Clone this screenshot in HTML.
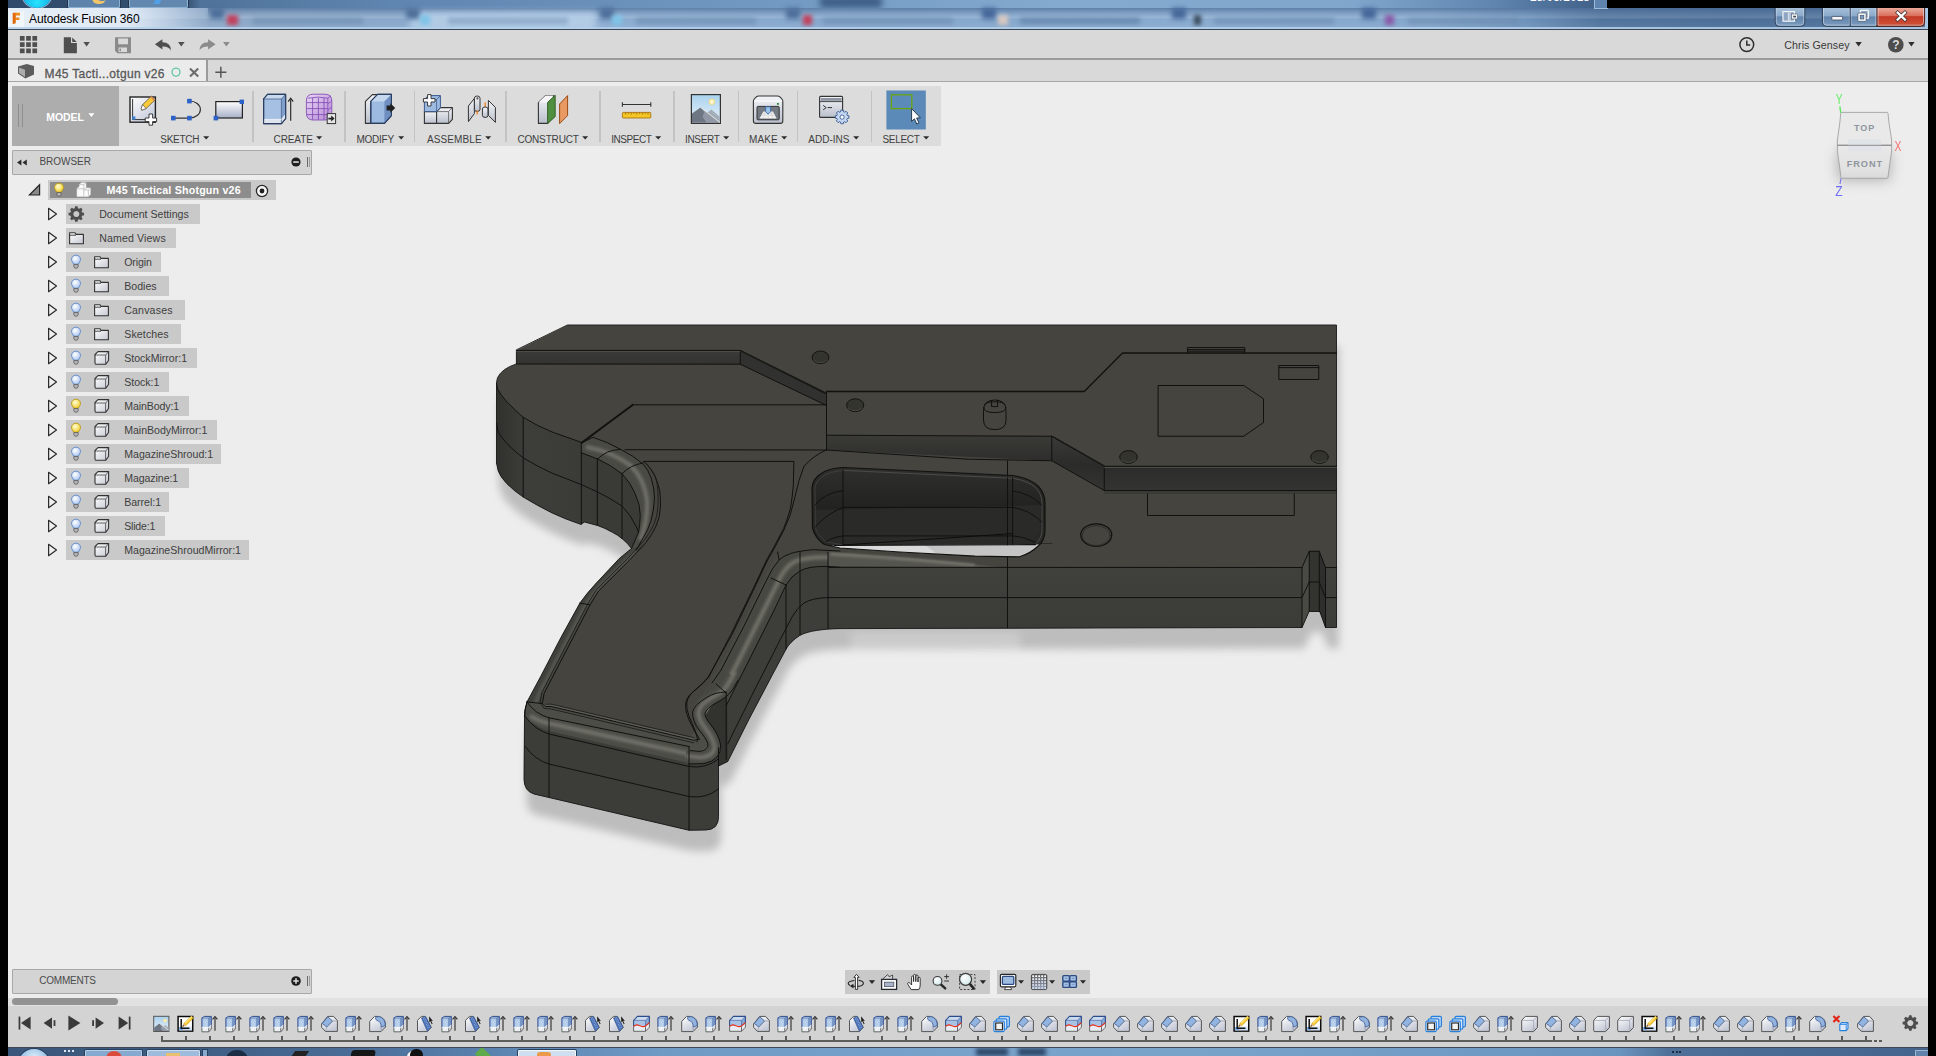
<!DOCTYPE html>
<html lang="en"><head><meta charset="utf-8"><title>Autodesk Fusion 360</title>
<style>
html,body{margin:0;padding:0;background:#ededed;}
body{width:1936px;height:1056px;overflow:hidden;font-family:"Liberation Sans",sans-serif;}
#root{position:relative;width:1936px;height:1056px;overflow:hidden;background:#ededed;}
#root div,#root svg{position:absolute;}
.t{white-space:nowrap;line-height:20px;height:20px;}
.blk{background:#000;}
.bar{background:#d9d9d9;}
.row{background:#c9c9c9;height:19.4px;}

</style></head>
<body>
<div id="root">
<svg width="0" height="0" style="left:0;top:0"><defs>
<linearGradient id="gBox" x1="0" y1="0" x2="1" y2="1"><stop offset="0" stop-color="#ffffff"/><stop offset="1" stop-color="#c6c9d2"/></linearGradient>
<linearGradient id="gBlue" x1="0" y1="0" x2="0" y2="1"><stop offset="0" stop-color="#b9cfea"/><stop offset="1" stop-color="#8fb0dc"/></linearGradient>
<radialGradient id="gBulbB" cx="0.4" cy="0.35" r="0.7"><stop offset="0" stop-color="#ffffff"/><stop offset="1" stop-color="#a9c6ee"/></radialGradient>
<radialGradient id="gBulbY" cx="0.4" cy="0.35" r="0.7"><stop offset="0" stop-color="#fffbd0"/><stop offset="1" stop-color="#f2cf2a"/></radialGradient>
<g id="bulbB"><path d="M6,1.2 C3.2,1.2 1.5,3.2 1.5,5.4 C1.5,7.4 3.2,8.4 3.6,10.2 L8.4,10.2 C8.8,8.4 10.5,7.4 10.5,5.4 C10.5,3.2 8.8,1.2 6,1.2 Z" fill="url(#gBulbB)" stroke="#5d86c8" stroke-width="0.9"/><path d="M3.9,10.6 H8.1 V12.6 Q8.1,14.2 6,14.2 Q3.9,14.2 3.9,12.6 Z" fill="#b9b9b9" stroke="#555" stroke-width="0.8"/></g>
<g id="bulbY"><path d="M6,1.2 C3.2,1.2 1.5,3.2 1.5,5.4 C1.5,7.4 3.2,8.4 3.6,10.2 L8.4,10.2 C8.8,8.4 10.5,7.4 10.5,5.4 C10.5,3.2 8.8,1.2 6,1.2 Z" fill="url(#gBulbY)" stroke="#b8961a" stroke-width="0.9"/><path d="M3.9,10.6 H8.1 V12.6 Q8.1,14.2 6,14.2 Q3.9,14.2 3.9,12.6 Z" fill="#b9b9b9" stroke="#555" stroke-width="0.8"/></g>
<g id="folder"><path d="M1.6,2.8 H7 L8,4.4 H15.4 V13.8 H1.6 Z" fill="url(#gBox)" stroke="#333" stroke-width="1.1" stroke-linejoin="round"/><path d="M1.6,5.2 H8" stroke="#333" stroke-width="0.9" fill="none"/></g>
<g id="body"><path d="M2,4.5 L5,1.6 H15.6 V10.5 L12.6,14.3 H3.4 Q2,14.3 2,12.9 Z" fill="url(#gBox)" stroke="#333" stroke-width="1.1" stroke-linejoin="round"/><path d="M12.6,14.3 V5.2 L15.6,1.6 M12.6,5 H3 Q2,5 2,6" stroke="#444" stroke-width="0.8" fill="none"/></g>
<g id="comp"><path d="M2,6.5 L4.4,4.6 V2.4 L6.6,0.8 H11 V6 H15.4 V12.4 L13.4,14.6 H2 Z" fill="#fbfbfb" stroke="#e0e0e0" stroke-width="0.6"/><path d="M8.8,2.8 V14.4 M8.8,7.6 L11,6 M2,6.8 H8.6 M8.8,8 H13.4 V14.4 M13.4,8 L15.2,6.2 M4.4,2.6 H8.8 L11,0.9" stroke="#bdbdbd" stroke-width="0.8" fill="none"/></g>
<g id="gear"><path d="M7.2,0.8 H9.8 L10.3,2.9 L11.6,3.5 L13.5,2.4 L15.3,4.2 L14.2,6.1 L14.8,7.4 L16.9,7.9 V10.5 L14.8,11 L14.2,12.3 L15.3,14.2 L13.5,16 L11.6,14.9 L10.3,15.5 L9.8,17.6 H7.2 L6.7,15.5 L5.4,14.9 L3.5,16 L1.7,14.2 L2.8,12.3 L2.2,11 L0.1,10.5 V7.9 L2.2,7.4 L2.8,6.1 L1.7,4.2 L3.5,2.4 L5.4,3.5 L6.7,2.9 Z M8.5,5.9 A3.3,3.3 0 1 0 8.51,5.9 Z" fill="#4e4e4e" fill-rule="evenodd" transform="translate(0.5,-0.4) scale(0.92)"/></g>

<linearGradient id="gIce" x1="0" y1="0" x2="1" y2="1"><stop offset="0" stop-color="#ffffff"/><stop offset="1" stop-color="#d5d9e2"/></linearGradient>

<linearGradient id="gIce2" x1="0" y1="0" x2="0.6" y2="1"><stop offset="0" stop-color="#ffffff"/><stop offset="1" stop-color="#c3c8d6"/></linearGradient>
<linearGradient id="gSkyS" x1="0" y1="0" x2="0" y2="1"><stop offset="0" stop-color="#a9d0ee"/><stop offset="1" stop-color="#eaf3fa"/></linearGradient>
<g id="tlIMG"><rect x="2.7" y="3.3" width="15.2" height="15.2" fill="url(#gSkyS)" stroke="#555" stroke-width="1"/><path d="M3.2,18 L3.2,14.6 L8.4,10.4 L17.4,17 V18 Z" fill="#6e7684"/><path d="M8.4,10.4 L10.6,13.4 L9.8,15.4 L12,18 H17.4 V17 Z" fill="#959cab"/><path d="M12.4,13.2 L14.4,12 L17.4,14.4 V17 Z" fill="#a9b1bd"/><path d="M8.4,10.4 L17.4,17.2" stroke="#ecece4" stroke-width="0.7"/><circle cx="14" cy="7.6" r="1.6" fill="#fff3c4" stroke="#f0d878" stroke-width="0.6"/></g>
<g id="tlSK"><rect x="3.1" y="3.5" width="14.6" height="14.6" fill="#fff" stroke="#0c0c0c" stroke-width="1.5"/><path d="M4,13.6 H16.8 V17.3 H4 Z" fill="#cfe0f4"/><path d="M4,14 H8 V17.3 H4 Z" fill="#7fb0e8"/><path d="M6.2,6 V15.2 H14.4" stroke="#111" stroke-width="1.5" fill="none"/><path d="M7.6,13.6 L9,10.2 L16.4,3 L18.4,5 L11,12.4 Z" fill="#f8c61c" stroke="#b07a10" stroke-width="0.4"/><path d="M9.6,9.8 L16.6,3.2 L17.4,4 L10.4,10.8 Z" fill="#fde98a"/><path d="M7.6,13.6 L9,10.2 L11,12.4 Z" fill="#e8b98a"/><path d="M7.6,13.6 L8.2,12.1 L9.1,13 Z" fill="#222"/></g>
<g id="tlEX"><path d="M2.9,4.9 L5.3,3.4 H12.3 V14.3 L9.8,18.8 H2.9 Z" fill="#edf1f6"/><path d="M2.9,4.9 H9.8 V14.3 H2.9 Z" fill="#a7c2e5"/><path d="M4.2,6.4 H8.6 V14.3 H4.2 Z" fill="#b9d0ec"/><path d="M9.8,4.9 L12.3,3.4 V12 L9.8,14.3 Z" fill="#84a3d2"/><path d="M2.9,4.9 L5.3,3.4 H12.3 L9.8,4.9 Z" fill="#cfdef0"/><path d="M2.9,14.3 V4.9 L5.3,3.4 H12.3 V12.4" fill="none" stroke="#2d4c8c" stroke-width="1"/><path d="M9.8,4.9 V14.3 M9.8,4.9 L12.3,3.4 M2.9,4.9 H9.8" fill="none" stroke="#4a68a4" stroke-width="0.7"/><path d="M2.9,14.3 V18.8 H9.8 L12.3,16 V12.4 M9.8,18.8 V14.6" fill="none" stroke="#5a5a5a" stroke-width="0.9"/><path d="M2.9,14.4 H9.8 L12.3,12.2" fill="none" stroke="#fff" stroke-width="0.8"/><path d="M16,17.8 V5" stroke="#2a2a2a" stroke-width="1.1"/><path d="M13.6,6.4 L16,3.6 L18.4,6.4" fill="none" stroke="#2a2a2a" stroke-width="1.1"/></g>
<g id="tlCH"><path d="M2.6,11 L8.6,3.4 H14.6 L18.4,7.6 V18.4 H6.4 L2.6,14.4 Z" fill="url(#gIce2)" stroke="#555" stroke-width="1" stroke-linejoin="round"/><path d="M3.2,10.4 L8.8,3.9 L13.6,8 L7.8,14 Z" fill="#94b4e0" stroke="#3a5a94" stroke-width="0.8" stroke-linejoin="round"/><path d="M7.8,14 L13.6,8 L18.2,7.8 M7.8,14 L6.6,18" fill="none" stroke="#8a8f9c" stroke-width="0.6"/></g>
<g id="tlFI"><path d="M2.7,18.6 V8.4 L7.6,3.4 H11 Q18.5,4.4 18.5,12.4 V14 L14,18.6 Z" fill="url(#gIce2)" stroke="#555" stroke-width="1" stroke-linejoin="round"/><path d="M8.2,5 Q9.6,3.6 11.6,3.5 Q18.2,4.6 18.3,12.4 L14.2,14.2 Q14.4,8.4 9.6,7.2 Z" fill="#94b4e0" stroke="#3a5a94" stroke-width="0.8" stroke-linejoin="round"/><path d="M14.2,14.2 V18.4" stroke="#8a8f9c" stroke-width="0.6"/></g>
<g id="tlPP"><path d="M2.5,18.6 V7.4 L6.4,3.4 H10 L16.2,14.4 L12.4,18.6 Z" fill="url(#gIce2)" stroke="#555" stroke-width="1" stroke-linejoin="round"/><path d="M6.4,4.9 L10.6,3.5 L16.2,14.3 L12.4,18.2 Z" fill="#4a72b8" stroke="#2c4a88" stroke-width="0.6" stroke-linejoin="round"/><path d="M8,4.6 L13.8,16.4 M9.4,4.2 L15.2,15.4" stroke="#a9c2e6" stroke-width="0.7" stroke-dasharray="1,0.8"/><path d="M14.1,3.2 L17.9,8 L16.2,7.8 L17.6,10.8 L16.7,11.2 L15.4,8.2 L14.3,9.4 Z" fill="#1e1e1e"/></g>
<g id="tlSP"><path d="M2.6,7.4 L6.5,3.4 H18.4 V14.3 L14.5,18.3 H2.6 Z" fill="#e9edf3"/><path d="M2.6,7.4 L6.5,3.4 H18.4 V9.6 L14.5,13.6 L10.6,12.6 L7,12.2 L2.6,13.4 Z" fill="#a7c2e5"/><path d="M14.5,7.4 L18.4,3.4 V9.6 L14.5,13.4 Z" fill="#86a5d3"/><path d="M2.6,7.4 L6.5,3.4 H18.4 L14.5,7.4 Z" fill="#cbdbef"/><path d="M2.6,13.2 V7.4 L6.5,3.4 H18.4 V9.8" fill="none" stroke="#2d4c8c" stroke-width="1.1"/><path d="M2.6,7.4 H14.5 V13.4 M14.5,7.4 L18.4,3.4" fill="none" stroke="#4a68a4" stroke-width="0.7"/><path d="M2.6,13.4 V18.3 H14.5 L18.4,14.3 V9.8 M14.5,18.3 V13.6" fill="none" stroke="#5a5a5a" stroke-width="0.9"/><path d="M2.6,13.4 C4.6,11.4 6.4,11.4 8.4,12.6 C10.6,13.8 12.6,14 14.5,13 L18.4,9.6" stroke="#ea2a14" stroke-width="1.1" fill="none"/></g>
<g id="tlCB"><rect x="8" y="3.4" width="10.4" height="10.4" rx="1.2" fill="#bcd6f2" stroke="#2880dc" stroke-width="1.2"/><rect x="5.4" y="5.8" width="10.4" height="10.4" rx="1.2" fill="#d6e6f8" stroke="#2880dc" stroke-width="1.2"/><rect x="2.9" y="8.2" width="10.4" height="10.4" rx="1.2" fill="#eef4fc" stroke="#2880dc" stroke-width="1.2"/><rect x="4.7" y="10" width="6.8" height="6.8" fill="#f4f4f4" stroke="#2a2a2a" stroke-width="1.2"/></g>
<g id="tlBX"><path d="M2.7,7.4 L6.4,3.4 H18.4 V14.4 L14.6,18.6 H4 Q2.7,18.6 2.7,17.4 Z" fill="url(#gIce2)" stroke="#555" stroke-width="1" stroke-linejoin="round"/><path d="M14.6,18.4 V7.4 H3 M14.6,7.4 L18.2,3.6" stroke="#9a9fab" stroke-width="0.7" fill="none"/></g>
<g id="tlRM"><path d="M2.4,3 L8.4,9 M8.4,3 L2.4,9" stroke="#e02418" stroke-width="2.1"/><path d="M8.8,11.4 L10.6,9.6 H17 V15.6 L15.2,17.6 H8.8 Z" fill="#dcebfa" stroke="#2880dc" stroke-width="1.1" stroke-linejoin="round"/><path d="M8.8,11.4 H15.2 V17.6 M15.2,11.4 L17,9.6" stroke="#2880dc" stroke-width="0.9" fill="none"/></g>
</defs></svg>
<div id="aero" style="left:8px;top:0;width:1920px;height:30px;overflow:hidden;background:#6f99c2">
 <div style="left:0;top:0;width:1920px;height:9px;background:linear-gradient(90deg,#2f4a6a 0,#34506f 9.3%,#4f7299 10%,#5f86b0 20%,#7199c1 40%,#84aacf 55%,#80a6cc 70%,#6288b2 77%,#4a6c95 81%,#3c5a80 84%,#36527a 100%)"></div>
 <div style="left:812px;top:-4px;width:62px;height:12px;background:#3f5f88;filter:blur(3px)"></div>
 <div style="left:14px;top:-22px;width:30px;height:30px;border-radius:15px;background:radial-gradient(circle at 50% 80%,#27e3ff 0,#16b8ea 45%,#1a6fa8 80%);box-shadow:0 0 0 1px #8fb4d8"></div>
 <div style="left:59px;top:-10px;width:52px;height:17px;border-radius:2px;background:#5f84ac;border:1px solid #23364d;box-shadow:inset 0 0 0 1px #8dafd2"></div>
 <div style="left:120px;top:-10px;width:59px;height:17px;border-radius:2px;background:#6288b0;border:1px solid #23364d;box-shadow:inset 0 0 0 1px #8dafd2"></div>
 <div style="left:84px;top:-8px;width:14px;height:12px;border-radius:7px;background:#f2c46a;filter:blur(0.6px)"></div>
 <div style="left:88px;top:-10px;width:12px;height:11px;border-radius:6px;background:#5f84ac"></div>
 <div style="left:147px;top:-3px;width:6px;height:7px;background:#4fa0e8;transform:skewX(-25deg)"></div>
 <div style="left:0;top:8px;width:1920px;height:21px;background:linear-gradient(90deg,#e4edf6 0,#dfe9f4 6.2%,#bccfe4 8%,#8aa6c6 10.5%,#86a6ca 20%,#8aabd0 30%,#82a5cb 45%,#86a9ce 62%,#82a5cb 74%,#6a90b9 79%,#4d719b 83%,#486b95 90%,#4d719b 100%)"></div>
 <div style="left:200px;top:8px;width:1720px;height:9px;background:linear-gradient(180deg,rgba(58,92,138,0.6) 0,rgba(58,92,138,0.25) 55%,rgba(58,92,138,0) 100%)"></div>
 <div style="left:0;top:8px;width:1920px;height:21px;background:linear-gradient(180deg,rgba(255,255,255,0.04) 0,rgba(255,255,255,0.14) 45%,rgba(255,255,255,0.02) 55%,rgba(255,255,255,0.08) 100%)"></div>
 <div style="left:402px;top:12px;width:186px;height:19px;background:#b9d1ea;filter:blur(3.5px);opacity:0.85"></div>
 <div style="left:202px;top:8px;width:14px;height:11px;background:#4d6f9a;filter:blur(2.5px)"></div>
 <div style="left:398px;top:8px;width:14px;height:11px;background:#4d6f9a;filter:blur(2.5px)"></div>
 <div style="left:592px;top:8px;width:14px;height:11px;background:#4d6f9a;filter:blur(2.5px)"></div>
 <div style="left:778px;top:8px;width:14px;height:11px;background:#4d6f9a;filter:blur(2.5px)"></div>
 <div style="left:974px;top:8px;width:14px;height:11px;background:#45679a;filter:blur(2.5px)"></div>
 <div style="left:1164px;top:8px;width:14px;height:11px;background:#45679a;filter:blur(2.5px)"></div>
 <div style="left:1354px;top:8px;width:14px;height:11px;background:#45679a;filter:blur(2.5px)"></div>
 <div style="left:219px;top:15px;width:11px;height:10px;background:#c2405c;filter:blur(2.2px)"></div>
 <div style="left:795px;top:15px;width:9px;height:10px;background:#c2405c;filter:blur(2.2px)"></div>
 <div style="left:412px;top:15px;width:10px;height:10px;background:#7fc4e8;filter:blur(2.2px)"></div>
 <div style="left:604px;top:15px;width:10px;height:10px;background:#7fc4e8;filter:blur(2.2px)"></div>
 <div style="left:990px;top:15px;width:10px;height:10px;background:#d8c8c0;filter:blur(2.2px)"></div>
 <div style="left:1186px;top:15px;width:7px;height:10px;background:#3b4a5c;filter:blur(2px)"></div>
 <div style="left:1377px;top:15px;width:9px;height:10px;background:#8a5aa8;filter:blur(2.2px)"></div>
 <div style="left:245px;top:18px;width:110px;height:6px;background:#6f8fb2;filter:blur(2.5px);opacity:0.8"></div>
 <div style="left:440px;top:18px;width:120px;height:6px;background:#7f9fc0;filter:blur(2.5px);opacity:0.8"></div>
 <div style="left:628px;top:18px;width:120px;height:6px;background:#6f8fb2;filter:blur(2.5px);opacity:0.8"></div>
 <div style="left:815px;top:18px;width:130px;height:6px;background:#6f8fb2;filter:blur(2.5px);opacity:0.8"></div>
 <div style="left:1012px;top:18px;width:120px;height:6px;background:#5f7fa6;filter:blur(2.5px);opacity:0.8"></div>
 <div style="left:1206px;top:18px;width:120px;height:6px;background:#6f8fb2;filter:blur(2.5px);opacity:0.8"></div>
 <div style="left:1400px;top:18px;width:110px;height:6px;background:#6f8fb2;filter:blur(2.5px);opacity:0.8"></div>
 <div style="left:0;top:27.4px;width:1920px;height:1.3px;background:#b4d0ea;opacity:0.85"></div>
 <div style="left:0;top:28.7px;width:1920px;height:1.3px;background:#39465a"></div>
 <div style="left:1916.6px;top:8px;width:3.4px;height:20px;background:#a9c9e8"></div>
 <div class="t" style="left:1510px;top:-13.4px;font-size:12px;color:#fff;width:72px;text-align:right">28/03/2018</div>
 <div style="left:1586px;top:-6px;width:12px;height:13px;background:#5d83ae;border:1px solid #9dbad8"></div>
</div>
<div style="left:8px;top:10.9px;width:16px;height:16px;background:linear-gradient(135deg,#e8f0f8,#f4f8fc)"></div>
<svg width="16" height="16" viewBox="0 0 16 16" style="left:8px;top:10.9px"><path d="M4.8,2.6 Q4.8,1.8 5.8,1.8 H12 V4.4 H7.8 V6.6 H11.4 V9 H7.8 V12 L4.8,12.9 Z" fill="#f08a1c"/><path d="M4.8,2.6 Q4.8,1.8 5.8,1.8 H7.4 V12.2 L4.8,12.9 Z" fill="#e06a10"/></svg>
<div class="t" style="left:29px;top:8.7px;font-size:12px;color:#000;letter-spacing:-0.12px">Autodesk Fusion 360</div>
<svg width="156" height="22" viewBox="1772 7 156 22" style="left:1772px;top:7px">
<defs>
<linearGradient id="wbB" x1="0" y1="0" x2="0" y2="1"><stop offset="0" stop-color="#a9c2dc"/><stop offset="0.48" stop-color="#8aa8c8"/><stop offset="0.5" stop-color="#6283aa"/><stop offset="1" stop-color="#7c9cc0"/></linearGradient>
<linearGradient id="wbR" x1="0" y1="0" x2="0" y2="1"><stop offset="0" stop-color="#eeb0a2"/><stop offset="0.45" stop-color="#d9705c"/><stop offset="0.5" stop-color="#c43a26"/><stop offset="1" stop-color="#cf5338"/></linearGradient>
</defs>
<path d="M1775.2,7 V22.4 Q1775.2,26.3 1779.2,26.3 H1800.8 Q1804.8,26.3 1804.8,22.4 V7 Z" fill="url(#wbB)" stroke="#2c3c54" stroke-width="1"/>
<path d="M1776.3,7 V22.2 Q1776.3,25.2 1779.4,25.2 H1800.6 Q1803.7,25.2 1803.7,22.2 V7" fill="none" stroke="#c2d6ea" stroke-width="0.8" opacity="0.8"/>
<path d="M1822.4,7 V22.4 Q1822.4,26.3 1826.4,26.3 H1877 V7 Z" fill="url(#wbB)" stroke="#2c3c54" stroke-width="1"/>
<path d="M1877,7 V26.3 H1920.6 Q1924.6,26.3 1924.6,22.4 V7 Z" fill="url(#wbR)" stroke="#4a1c14" stroke-width="1"/>
<path d="M1823.5,7 V22.2 Q1823.5,25.2 1826.6,25.2 H1849.4 V7 M1851,7 V25.2 H1875.9 V7 M1878.1,7 V25.2 H1920.4 Q1923.5,25.2 1923.5,22.2 V7" fill="none" stroke="#dbe6f2" stroke-width="0.8" opacity="0.7"/>
<path d="M1850.2,7 V26" stroke="#2c3c54" stroke-width="1"/>
<rect x="1783" y="11.6" width="11.4" height="9.6" fill="#8ea6c4" stroke="#f4f4f4" stroke-width="1.2"/>
<path d="M1788.4,12.4 V20.6 M1790,12.4 V20.6" stroke="#f4f4f4" stroke-width="0.8"/>
<rect x="1791.6" y="14" width="6" height="5" fill="#f4f4f4" stroke="#3c4c64" stroke-width="0.5"/><rect x="1793.2" y="15.8" width="2.8" height="1.6" fill="#3c4c64"/>
<rect x="1831.8" y="16.4" width="10.8" height="3.6" rx="0.6" fill="#f6f6f6" stroke="#3c4c64" stroke-width="0.8"/>
<rect x="1860.4" y="10.4" width="8" height="8" rx="0.8" fill="#8ea6c4" stroke="#f6f6f6" stroke-width="1.4"/>
<rect x="1857.8" y="13" width="8.4" height="8.4" rx="0.8" fill="#f6f6f6" stroke="#3c4c64" stroke-width="0.7"/>
<rect x="1860.2" y="15.4" width="3.6" height="3.6" fill="#7c9cc0" stroke="#3c4c64" stroke-width="0.6"/>
<path d="M1897.6,12.6 L1905,19.6 M1905,12.6 L1897.6,19.6" stroke="#3c2c2c" stroke-width="3.6" stroke-linecap="square"/>
<path d="M1897.6,12.6 L1905,19.6 M1905,12.6 L1897.6,19.6" stroke="#fff" stroke-width="2.2" stroke-linecap="square"/>
</svg>
<div class="bar" style="left:8px;top:30px;width:1920px;height:29px"></div>
<div style="left:8px;top:58.3px;width:1920px;height:1.8px;background:#9b9b9b"></div>
<svg width="230" height="22" viewBox="8 33 230 22" style="left:8px;top:33px">
<g fill="#4f4f4f">
<rect x="19.9" y="36" width="4.7" height="4.7"/><rect x="26.15" y="36" width="4.7" height="4.7"/><rect x="32.4" y="36" width="4.7" height="4.7"/>
<rect x="19.9" y="42.25" width="4.7" height="4.7"/><rect x="26.15" y="42.25" width="4.7" height="4.7"/><rect x="32.4" y="42.25" width="4.7" height="4.7"/>
<rect x="19.9" y="48.5" width="4.7" height="4.7"/><rect x="26.15" y="48.5" width="4.7" height="4.7"/><rect x="32.4" y="48.5" width="4.7" height="4.7"/>
<path d="M63.8,37.2 H71 V43 H76.9 V53.2 H63.8 Z M72.2,37.4 L76.8,41.9 H72.2 Z"/>
<path d="M83.4,42 H89.8 L86.6,46.6 Z"/>
<path d="M154.9,44.2 L162.4,39.2 V42.2 Q171,42.4 171,50.6 Q168.6,46.4 162.4,46.6 V49.4 Z"/>
<path d="M178,42 H184.6 L181.3,46.6 Z"/>
</g>
<g fill="#8b8b8b">
<path d="M115,37.2 H131 V53.2 H117.4 L115,50.8 Z M118.2,38.6 V44.2 H128 V38.6 Z M118.6,47.6 V52 H127 V47.6 Z" fill-rule="evenodd"/>
<rect x="119.6" y="48.6" width="1.4" height="2.6" fill="#8b8b8b"/>
<path d="M215.6,44.2 L208.1,39.2 V42.2 Q199.5,42.4 199.5,50.6 Q201.9,46.4 208.1,46.6 V49.4 Z"/>
<path d="M223,42 H229.8 L226.4,46.6 Z"/>
</g>
</svg>
<svg width="180" height="22" viewBox="1736 33 180 22" style="left:1736px;top:33px">
<circle cx="1746.8" cy="44.6" r="6.9" fill="none" stroke="#2e2e2e" stroke-width="1.5"/>
<path d="M1746.8,40.6 V45 H1750.2" fill="none" stroke="#2e2e2e" stroke-width="1.5"/>
<path d="M1855.4,42 H1861.8 L1858.6,46.4 Z" fill="#2e2e2e"/>
<circle cx="1895.8" cy="44.8" r="7.8" fill="#4d4d4d"/>
<path d="M1908.2,42 H1914.6 L1911.4,46.4 Z" fill="#2e2e2e"/>
</svg>
<div class="t" style="left:1891.8px;top:34.6px;width:8px;text-align:center;font-size:12px;font-weight:bold;color:#dcdcdc">?</div>
<div class="t " style="left:1784.30px;top:34.60px;font-size:10.67px;color:#3a3a3a;letter-spacing:0.064px;">Chris Gensey</div><div class="bar" style="left:8px;top:60px;width:1920px;height:21px"></div>
<div style="left:8px;top:60px;width:198px;height:21px;background:#ebebeb"></div>
<div style="left:206px;top:60px;width:1.8px;height:21px;background:#9b9b9b"></div>
<div style="left:8px;top:80.8px;width:1920px;height:1.1px;background:#a6a6a6"></div>
<svg width="220" height="20" viewBox="12 62 220 20" style="left:12px;top:62px">
<path d="M18,66.4 L26.8,64.1 L34,66 V74.6 L25.4,78.6 L18,73.6 Z" fill="#5c5c5c"/>
<path d="M19,67.6 L25,69.8 V77 L19,73 Z" fill="#adadad"/>
<circle cx="176" cy="72.1" r="4" fill="none" stroke="#62c6a8" stroke-width="1.3"/>
<path d="M190,68.4 L198.2,76.6 M198.2,68.4 L190,76.6" stroke="#6c6c6c" stroke-width="2.1" fill="none"/>
<path d="M215.3,72.2 H226.4 M220.85,66.8 V77.7" stroke="#555" stroke-width="1.5" fill="none"/>
</svg>
<div class="t " style="left:44.60px;top:63.60px;font-size:12.00px;color:#585858;letter-spacing:0.302px;-webkit-text-stroke:0.3px #585858;">M45 Tacti...otgun v26</div><svg id="model" width="1000" height="620" viewBox="440 280 1000 620" style="left:440px;top:280px">
<defs>
<filter id="mBlur" x="-10%" y="-10%" width="120%" height="120%"><feGaussianBlur stdDeviation="4.5"/></filter>
<filter id="mBlur2" x="-10%" y="-10%" width="120%" height="120%"><feGaussianBlur stdDeviation="1.6"/></filter>
<linearGradient id="mWall" x1="0" y1="0" x2="0" y2="1"><stop offset="0" stop-color="#3a3a37"/><stop offset="0.55" stop-color="#2b2b29"/><stop offset="1" stop-color="#343432"/></linearGradient>
<linearGradient id="mStock" x1="0" y1="0" x2="1" y2="0"><stop offset="0" stop-color="#30302d"/><stop offset="0.35" stop-color="#3d3d39"/><stop offset="1" stop-color="#3b3b37"/></linearGradient>
<linearGradient id="mHole" x1="0" y1="0" x2="0" y2="1"><stop offset="0" stop-color="#2f2f2d"/><stop offset="0.45" stop-color="#222221"/><stop offset="1" stop-color="#2c2c2a"/></linearGradient>
<linearGradient id="mFront" x1="0" y1="0" x2="0" y2="1"><stop offset="0" stop-color="#41413d"/><stop offset="1" stop-color="#3b3b38"/></linearGradient>
<linearGradient id="mFil" x1="0" y1="0" x2="1" y2="0.5"><stop offset="0" stop-color="#35352f"/><stop offset="0.5" stop-color="#66665f"/><stop offset="1" stop-color="#3d3d39"/></linearGradient>
<clipPath id="holeClip"><path d="M843,467.5 L1013,475.5 Q1030,478 1038,486 Q1045,493 1045,503 L1045,530 Q1045,541 1037.6,546.5 Q1031,553 1019.7,556.8 L975,556.2 L900,552 L840,548 L824.5,544.5 Q815,538 812.5,528 L812,487.7 Q812.5,478 824.5,471.5 Q832,468 843,467.5 Z"/></clipPath>
<path id="sil" d="M567.75,325 L1336.5,325 L1336.5,627.5 L1325.5,627.5 L1320,611.5 L1309,611.5 L1302,627.5 L840,628.6 C822,629 808,631 799.8,635.4 C793,640 789,644 786.1,649.1 L772.5,674.6 L748.6,720 L727.75,761.5 L718.5,766 L718.5,816.5 Q718.5,829.5 706,830 L689,830.25 L534,794 Q524,791 524,779 L524.5,720 Q524.8,709 527,701.9 L540.7,676.4 L561.1,637.2 L579.9,603.1 Q587,593 595.2,584.3 L619.1,558.7 L631.5,548.5 Q628,543.5 622.6,539.1 Q618,535 612.4,532.3 Q605,528 597.6,525.5 L584.6,522 L580.6,524.3 Q566,519.5 552.2,513 Q537,505.5 523.2,497 Q514,491 506.7,483.4 Q500.5,477 498.2,470.9 L496.5,463 L496.5,383.2 Q496.8,380 497.6,377.5 Q502,368.5 516.4,363.9 L516.4,350.2 Z"/>
</defs>
<!-- shadow -->
<g filter="url(#mBlur)" opacity="0.92"><use href="#sil" transform="translate(2.5,21)" fill="#b9b9b9"/></g>
<rect x="850" y="632" width="170" height="30" fill="#ededed" opacity="0.3" filter="url(#mBlur)"/>
<!-- base -->
<use href="#sil" fill="#45443f"/>
<!-- stock side wall -->
<path d="M496.5,383.2 L497.6,388.9 Q500.5,395 506.7,401.4 Q514,409.5 523.2,417.3 Q537,426 552.2,432 L581.2,442.3 L581.2,524.3 L580.6,524.3 Q566,519.5 552.2,513 Q537,505.5 523.2,497 Q514,491 506.7,483.4 Q500.5,477 498.2,470.9 L496.5,463 Z" fill="url(#mStock)"/>
<!-- backstrap wall -->
<path d="M581.2,452.7 L597.6,459 Q611,465 622,473.75 Q631,483 635.1,493.6 Q640.5,505 640.25,515.2 Q640,525 638.5,532.3 L631.5,548.5 Q628,543.5 622.6,539.1 Q618,535 612.4,532.3 Q605,528 597.6,525.5 L584.6,522 L581.2,524.3 Z" fill="#3a3a36"/>
<!-- backstrap fillet band -->
<path d="M581.7,442.8 L593,437.4 Q608,442 620.4,449.3 Q634,456 643.1,464.1 Q648.5,470 651,477.7 Q654.5,488 654.5,498.2 Q654,510 651,520.9 Q648,530 643.1,538 L636.3,550 L631.5,548.5 L638.5,532.3 Q640,525 640.25,515.2 Q640.5,505 635.1,493.6 Q631,483 622,473.75 Q611,465 597.6,459 L581.2,452.7 Z" fill="#4a4a45"/>
<path d="M586,447 Q610,451 630,465 Q644,478 647,500 Q648,522 640,540" fill="none" stroke="#76766e" stroke-width="4" filter="url(#mBlur2)" opacity="0.9"/>
<!-- grip left fillet -->
<path d="M631.5,548.5 L619.1,558.7 L595.2,584.3 Q587,593 579.9,603.1 L561.1,637.2 L540.7,676.4 L527,701.9 Q524.8,709 524.5,720 L549,717.75 L542.4,703.6 L544.1,693.4 L566.2,650.8 L590.1,604.8 L598.6,591.1 L629.3,560.5 L646.4,545.1 Z" fill="#3f3f3b"/>
<path d="M636,551 L600,586 Q590,598 584,608 L562,650 L540,692 Q534,704 535,712" fill="none" stroke="#5d5d57" stroke-width="3" filter="url(#mBlur2)"/>
<!-- grip butt walls -->
<path d="M524.5,716 L549,718 L689,746.5 L718.5,744 L718.5,816.5 Q718.5,829.5 706,830 L689,830.25 L534,794 Q524,791 524,779 Z" fill="#3c3c38"/>
<path d="M524.3,712 Q524,722 549,731 L689,763 Q712,766 718.5,752 L718.5,740 Q716,728 703,728 Q696,727 690,738 L552,708 Q545,706 542.4,703.6 L527,701.9 Z" fill="#4d4d48"/>
<path d="M530,716 Q540,722 552,724 L689,754 Q708,757 712,744" fill="none" stroke="#77776f" stroke-width="4" filter="url(#mBlur2)" opacity="0.9"/>
<!-- grip right wall -->
<path d="M840,567.3 L828,566.4 Q808,566 799.8,571 Q791,576 786,585 L774.2,610 L748.6,661 L726.5,705 L720,722 L718.5,744 L718.5,766 L727.75,761.5 L748.6,720 L772.5,674.6 L786.1,649.1 C789,644 793,640 799.8,635.4 C808,631 822,629 840,628.6 Z" fill="#3d3d39"/>
<!-- grip right fillet band -->
<path d="M777.6,552 L766.6,572 L755.4,596 L731.6,643 L707.7,686 L700,697 Q694,703 696,712 L703,728 Q716,728 718.5,740 L720,722 L726.5,705 L748.6,661 L774.2,610 L786,585 Q791,576 799.8,571 Q808,566 828,566.4 L840,567.3 L840,551 L813.2,549.7 Q798,551 790.5,553.6 Q783,556 779,560 Z" fill="#484843"/>
<path d="M836,557.5 Q806,556 794,562 Q784,568 778,582 L760,618 L738,662 L718,700 Q706,708 708,716 L712,726" fill="none" stroke="#74746c" stroke-width="4.5" filter="url(#mBlur2)" opacity="0.9"/>

<!-- S-curve rework -->
<path d="M726.5,694 L712,705 L705,716 L708,726 L716,738 L718.5,748 L718.5,766 L727.75,761.5 L727,700 Z" fill="#32322f"/>
<path d="M733,676 L727,686 Q723,692 712,697.5 Q700,704 698.5,712 Q698,719 705.5,728.5 Q713,738 714.5,746 Q715,756 701,757.5 L686,757" fill="none" stroke="#4b4b46" stroke-width="12.5" stroke-linejoin="round"/>
<path d="M735,672 L727,686 Q723,692 712,697.5 Q700,704 698.5,712 Q698,719 705.5,728.5 Q713,738 714.5,746 Q715,756 701,757.5 L686,756" fill="none" stroke="#77776f" stroke-width="4" filter="url(#mBlur2)" opacity="0.9"/>
<!-- body front wall -->
<path d="M828,567.3 L1302,567.5 L1309.25,551.25 L1319.25,551.25 L1325.5,567.5 L1336.5,567.5 L1336.5,627.5 L1325.5,627.5 L1320,611.5 L1309,611.5 L1302,627.5 L840,628.6 L828,629 Z" fill="url(#mFront)"/>
<path d="M1309.25,551.25 H1319.25 V611.5 H1309.25 Z" fill="#33332f"/>
<path d="M1302,567.5 L1309.25,551.25 V611.5 L1302,627.5 Z" fill="#4a4a44"/>
<path d="M1319.25,551.25 L1325.5,567.5 V627.5 L1319.25,611.5 Z" fill="#2e2e2c"/>
<!-- guard top highlight -->
<path d="M828,552.3 Q900,556 1001.7,567.3 L828,566.4 Z" fill="#55554f"/>
<path d="M830,554 Q900,558 975,565" fill="none" stroke="#96968c" stroke-width="1.6" filter="url(#mBlur2)"/>
<!-- step walls -->
<path d="M516.4,350.4 H740.25 L825.25,392.5 L826.5,405.5 L740.25,364.2 H516.4 Z" fill="url(#mWall)"/>
<path d="M740.25,350.4 L825.25,392.5 L826.5,405.5 L740.25,364.2 Z" fill="#31312f"/>
<path d="M826.5,435.2 L1051.75,436.25 L1104.25,466.25 L1336.5,466.25 L1336.5,490.5 L1104.25,490.5 L1051.75,460.75 L826.5,450 Z" fill="url(#mWall)"/>
<path d="M1104.25,490.5 H1336.5 V494 H1104.25 Z" fill="#3a3a37"/>
<!-- trigger opening -->
<path id="hole" d="M843,467.5 L1013,475.5 Q1030,478 1038,486 Q1045,493 1045,503 L1045,530 Q1045,541 1037.6,546.5 Q1031,553 1019.7,556.8 L975,556.2 L900,552 L840,548 L824.5,544.5 Q815,538 812.5,528 L812,487.7 Q812.5,478 824.5,471.5 Q832,468 843,467.5 Z" fill="url(#mHole)"/>
<path d="M816,510 L816,527 Q818,536 826,541.5 L843,545 L1012,544.6 Q1034,543 1040,531 L1041,505 Z" fill="#2a2a28"/>
<g clip-path="url(#holeClip)"><path d="M834,545.3 L1050,544.4 L1050,560 L800,560 Z" fill="#c5c5c5"/>
<path d="M834,545.3 L925,545 L945,560 L800,560 Z" fill="#dadada"/></g>

<!-- holes -->
<g fill="#34342f" stroke="#121210" stroke-width="1">
<ellipse cx="820.5" cy="357.3" rx="8.4" ry="6.3"/><ellipse cx="855.2" cy="405.2" rx="8.6" ry="6.4"/>
<ellipse cx="1128.5" cy="457" rx="8.8" ry="6.4"/><ellipse cx="1319.5" cy="457" rx="8.8" ry="6.4"/>
</g>
<g fill="none" stroke="#4a4a44" stroke-width="0.9">
<path d="M813.5,360 Q820.5,365.5 827.5,360"/><path d="M848,408 Q855.2,413.5 862.4,408"/><path d="M1121.2,459.8 Q1128.5,465.3 1135.8,459.8"/><path d="M1312.2,459.8 Q1319.5,465.3 1326.8,459.8"/>
</g>
<g fill="none" stroke="#11110f" stroke-width="1" stroke-linejoin="round" stroke-linecap="round">
<!-- silhouette outline (thin) -->
<use href="#sil" stroke-width="0.9" stroke="#1a1a18"/>
<!-- upper step -->
<path d="M516.4,350.4 H740.25 L825.25,392.5 M516.4,364 L740.25,364.2 L826.5,405.5 M740.25,350.4 V364.2 M826.5,392 V450"/>
<path d="M516.4,351.6 H740" stroke="#55554f" stroke-width="0.8"/>
<path d="M741,351 L825.25,393.4" stroke-dasharray="1.2,1.2" stroke-width="1.6" stroke="#1a1a18"/>
<path d="M632.9,404.8 H825.5 M625,449.7 L826.5,450"/>
<path d="M632.9,404.8 L581.7,442.8" stroke-width="2"/>
<!-- body top detail lines -->
<path d="M826.5,391.5 H1084.25 L1122.5,353 H1336.5" stroke-width="1.3"/>
<path d="M1187.5,353 V347.5 H1244.75 V353 M1187.5,349.6 H1244.75 M1187.5,351.2 H1244.75"/>
<rect x="1279.25" y="365.5" width="39.5" height="14"/><path d="M1279.25,367.6 H1318.75"/>
<path d="M1158.5,385.5 H1243.75 L1263.5,398.75 V422.5 L1243.75,436.25 H1158.5 Z"/>
<path d="M983.5,410.6 Q983.5,400 994.75,400 Q1006,400 1006,410.6 V420.4 Q1006,429.6 994.75,429.6 Q983.5,429.6 983.5,420.4 Z"/>
<path d="M983.5,407.4 Q983.5,412.6 994.75,412.6 Q1006,412.6 1006,407.4 M984.6,404.4 Q986,401.8 994.75,401.8 Q1003.5,401.8 1005,404.4 M991.6,400.4 V406.4 M997.6,400.2 V406.4 M991.6,406.4 Q994.6,407.2 997.6,406.4"/>
<!-- main wall -->
<path d="M826.5,435.2 L1051.75,436.25 L1104.25,466.25 H1336.5 M826.5,450 L968,459.2 L1051.75,460.75 L1104.25,490.5 H1336.5 M1051.75,436.25 V460.75 M1104.25,466.25 V490.5"/>
<path d="M1052.6,436.6 L1104.25,466" stroke-dasharray="1.2,1.2" stroke-width="1.6" stroke="#1a1a18"/>
<path d="M1104.25,467.5 H1336.5" stroke="#55554f" stroke-width="0.8"/>
<path d="M1147.5,493.75 V515.5 H1294.25 V493.75"/>
<ellipse cx="1096.25" cy="535" rx="15.5" ry="11.2" stroke-width="1.2"/><ellipse cx="1096.25" cy="535.6" rx="14" ry="10" stroke="#2a2a27" stroke-width="0.9"/>
<path d="M1040,543.5 H1052" stroke="#2a2a27"/>
<path d="M1007.5,461 V476 M1007.5,557 V627.6"/>
<!-- front wall -->
<path d="M828,567.3 L1302,567.5 L1309.25,551.25 H1319.25 L1325.5,567.5 H1336.5 M828,597.6 L1302,597.6 L1309.25,582 V551.25 M1309.25,582 H1319.25 L1325.5,597.6 H1336.5 M1319.25,551.25 V611.5 M1309.25,582 V611.5 M1302,567.5 V627.5 M1325.5,567.5 V627.5 M828,552.3 V629"/>
<!-- trigger opening -->
<path d="M843,467.5 L1013,475.5 Q1030,478 1038,486 Q1045,493 1045,503 L1045,530 Q1045,541 1037.6,546.5 Q1031,553 1019.7,556.8 L975,556.2 L900,552 L840,548 L824.5,544.5 Q815,538 812.5,528 L812,487.7 Q812.5,478 824.5,471.5 Q832,468 843,467.5 Z" stroke-width="1.2"/>
<path d="M843.6,470.4 L1012.6,478.3 Q1028,480.6 1035.6,487.6 Q1042,494 1042,503.4 L1042,529.6 Q1042,538.6 1035.6,543.8" stroke="#4c4c46" stroke-width="1"/>
<path d="M843.6,470.4 Q833,471 826,474.4 Q815.4,480 815,488.6 L815.4,527.4 Q817.6,536 826,541.8 L843,545" stroke="#3e3e39" stroke-width="1"/>
<path d="M843,470.4 V545 M1012.6,478.3 V544.6 M1007.5,478 V544.8 M843,507.4 H1012.6 M843,535.9 L1012.6,535.9 M815.2,505 Q824,493 843,490.6 M815.4,527 Q826,514 843,507.4 M826,541.6 Q832,537.4 843,535.9 M1012.6,491 Q1030,493 1041.6,505 M1012.6,507.4 Q1030,510 1041.8,522 M1012.6,535.9 Q1026,537 1036,543"/>
<path d="M843,545 L1012.6,533.6" stroke="#0e0e0d"/>
<path d="M834,545.5 L1035.5,544.6" stroke="#0e0e0d" stroke-width="1.1"/>
<!-- guard curve -> panel right outer -->
<path d="M825.7,450.2 Q813.2,455.9 804.1,466.1 Q798.4,479.8 795,496.8 L790.5,513.9 Q787,523 783.6,530.6 L773.4,550 L766.6,562 L755.4,586 L731.6,635.4 L707.7,678 Q700,686 692.5,692.4 Q686.5,697 685.6,704 Q685,712 689,720 L695.6,733 Q698.4,739 697,742"/>
<path d="M738,680 L733,689 Q728,697 716,703 Q706,708.6 705,713.6 Q705,718 711,725 Q719,735 720.6,745 Q721.6,760 704,763.6 L689,764 M726.4,692 Q714,692 706,698 Q694,705 692.6,712 Q692,720 699,730 Q706.4,738.6 708,744 Q708.4,750 700,751.4 L690,750.6 M726.2,693 V759.3 M726.2,693 L716,684"/>
<!-- grip panel -->
<path d="M643.9,461.4 H793.9 L793.3,485.5 Q792.4,497 790.5,508.2 Q787.6,519 783.6,528.6 L773.4,548 L766.6,560 L755.4,584 L731.6,633 L709,676.5 Q703,684 696.5,689 Q688.4,694.6 686.8,702.5 Q686,709 689,716 L696.5,734 L699.5,739.4 L694,740.25 L551.5,706.5 L545.25,706.5 L542.4,703.6 L544.1,693.4 L566.2,650.8 L590.1,604.8 L598.6,591.1 L629.3,560.5 L646.1,542.3 Q653,533.6 656.4,525.2 Q660,516.8 660.3,508.2 Q660.8,499.4 659.8,491.1 Q657.8,482 654.1,474.1 Q650,467 643.9,461.4 Z"/>
<path d="M646.6,464 Q652,470 655.6,477.6 Q657.6,484 657.9,491.4 Q658.4,499.6 657.8,508 Q657.4,516.4 654,524.2 Q650.6,532 644,540.6 L627.4,558.8 L596.6,589.5 L588,603.4 L564,649.6 L541.8,692.6 L540,703 L544,708.4 L551.2,709 L693.6,742.8" stroke="#1c1c1a" stroke-width="0.9"/>
<path d="M546,704.2 L551.8,704.2 L694.4,737.8" stroke="#1c1c1a" stroke-width="0.8"/>
<path d="M545.6,705.4 L551.6,705.4 L694.2,739" stroke="#6a6a62" stroke-width="0.8"/>
<!-- stock lines -->
<path d="M496.5,383.2 L497.6,388.9 Q500.5,395 506.7,401.4 Q514,409.5 523.2,417.3 Q537,426 552.2,432 L581.2,442.3 M581.3,442.3 V524.3 M523.2,417.3 V497 M496.6,423.5 L498.2,432.3 Q507,446 523.2,457.8 Q537,466.4 552.2,473.2 L581.2,484.5 L597.6,492 Q611,498.6 622,506.1 Q631,515 636.3,526.6 L638.5,532.3"/>
<!-- backstrap lines -->
<path d="M581.7,442.8 L593,437.4 Q608,442 620.4,449.3 Q634,456 643.1,464.1 Q648.5,470 651,477.7 Q654.5,488 654.5,498.2 Q654,510 651,520.9 Q648,530 643.1,538 L636.3,550"/>
<path d="M581.2,452.7 L597.6,459 Q611,465 622,473.75 Q631,483 635.1,493.6 Q640.5,505 640.25,515.2 Q640,525 638.5,532.3 L631.5,548.5"/>
<path d="M597.3,458.4 V525.5 M622,473.75 V538.5 M597.6,459 Q606,450 620.4,449.3 M622,473.75 Q630,465 643.1,463"/>
<!-- grip left rim -->
<path d="M579.9,603.1 L590.1,604.8 M527,701.9 L542.4,703.6"/>
<!-- butt -->
<path d="M525.25,716.5 Q535,730 549,734 L689,766.5 Q706,769 718.5,759 M525.25,746.5 Q535,760 549,764 L689,796.5 Q706,799 718.5,789 M549,717.75 V796.8 M689,746.5 V830"/>
<path d="M527,701.9 Q524.4,709 524.4,716.5 M549,717.75 Q535,714 527,701.9 M549,717.75 L689,746.5 M718.5,766 V748"/>
<!-- grip right wall lines -->
<path d="M840,567.3 L828,566.4 Q808,566 799.8,571 Q791,576 786,585 L774.2,610 L748.6,661 L726.5,705"/>
<path d="M828,597.6 Q812,598 804,603 Q797,608 792,617 L778,644 L752,695 L733,733 L727.75,744"/>
<path d="M840,551 L813.2,549.7 Q798,551 790.5,553.6 Q783,556 779,560 L777.6,552 M800,551.6 V635 M786,585 L771,578 M786,585 V649"/>
<path d="M779,560 Q772,568 766.6,580 L744,626 L721,670 L712,683"/>
</g>
</svg>
<div style="left:1838px;top:150px;width:52px;height:30px;background:#9a9a9a;filter:blur(7px);opacity:0.75"></div>
<svg width="90" height="110" viewBox="1826 90 90 110" style="left:1826px;top:90px">
<defs><linearGradient id="vcF" x1="0" y1="0" x2="0" y2="1"><stop offset="0" stop-color="#e9e9e9"/><stop offset="0.75" stop-color="#e1e1e1"/><stop offset="1" stop-color="#d9d9d9"/></linearGradient></defs>
<path d="M1841.6,112.4 H1887 Q1887.9,112.4 1888,113.4 L1889,123 L1891.6,140 V145.3 H1837.4 V140 L1839.8,123 L1840.7,113.4 Q1840.8,112.4 1841.6,112.4 Z" fill="#e9e9e9" stroke="#a2a2a2" stroke-width="0.9"/>
<path d="M1837.4,145.3 H1891.6 V151 L1889.2,168 L1888,177.2 Q1887.9,178.3 1887,178.3 H1841.8 Q1841,178.3 1840.9,177.2 L1839.8,168 L1837.4,151 Z" fill="url(#vcF)" stroke="#a2a2a2" stroke-width="0.9"/>
<rect x="1847.8" y="139.2" width="33.6" height="12.2" rx="1.5" fill="#e0e3e8"/>
<path d="M1837.2,145.3 H1891.8" stroke="#8c8c8c" stroke-width="1"/>
<path d="M1839.8,106.4 L1840.8,112.8" stroke="#5fe85f" stroke-width="1.4"/>
<path d="M1841,178.4 L1840,184" stroke="#7a7af0" stroke-width="1.2"/>
</svg>
<div class="t" style="left:1844.6px;top:117.7px;width:40px;text-align:center;font-size:9px;font-weight:bold;color:#90959d;letter-spacing:0.9px">TOP</div>
<div class="t" style="left:1839.9px;top:153.5px;width:50px;text-align:center;font-size:9.2px;font-weight:bold;color:#90959d;letter-spacing:0.9px">FRONT</div>
<div class="t" style="left:1829.4px;top:89.1px;width:20px;text-align:center;font-size:14px;color:#62ee62;transform:scaleX(0.72)">Y</div>
<div class="t" style="left:1887.6px;top:135.6px;width:20px;text-align:center;font-size:14px;color:#f47272;transform:scaleX(0.74)">X</div>
<div class="t" style="left:1829.2px;top:181.3px;width:20px;text-align:center;font-size:14px;color:#6c6cf4;transform:scaleX(0.86)">Z</div>
<div style="left:12px;top:86px;width:929px;height:59.6px;background:#dcdcdc"></div><div style="left:12px;top:86px;width:107px;height:59.6px;background:#adadad"></div><div style="left:18px;top:104px;width:1px;height:23px;background:#8f8f8f"></div><div style="left:21.5px;top:104px;width:1px;height:23px;background:#8f8f8f"></div><div class="t " style="left:46.30px;top:106.80px;font-size:10.50px;color:#fff;font-weight:bold;letter-spacing:-0.083px;">MODEL</div><svg width="8" height="5" viewBox="0 0 8 5" style="left:87.6px;top:113.4px"><path d="M0.4,0.3 H6.4 L3.4,4 Z" fill="#fff"/></svg><div class="t " style="left:160.30px;top:130.00px;font-size:10.00px;color:#404040;letter-spacing:-0.261px;">SKETCH</div><svg width="8" height="5" viewBox="0 0 8 5" style="left:202.9px;top:136.3px"><path d="M0.2,0.2 H6.2 L3.2,3.6 Z" fill="#2c2c2c"/></svg><div class="t " style="left:273.50px;top:130.00px;font-size:10.00px;color:#404040;letter-spacing:-0.087px;">CREATE</div><svg width="8" height="5" viewBox="0 0 8 5" style="left:316.4px;top:136.3px"><path d="M0.2,0.2 H6.2 L3.2,3.6 Z" fill="#2c2c2c"/></svg><div class="t " style="left:356.40px;top:130.00px;font-size:10.00px;color:#404040;letter-spacing:-0.231px;">MODIFY</div><svg width="8" height="5" viewBox="0 0 8 5" style="left:397.5px;top:136.3px"><path d="M0.2,0.2 H6.2 L3.2,3.6 Z" fill="#2c2c2c"/></svg><div class="t " style="left:427.10px;top:130.00px;font-size:10.00px;color:#404040;letter-spacing:0.086px;">ASSEMBLE</div><svg width="8" height="5" viewBox="0 0 8 5" style="left:485.3px;top:136.3px"><path d="M0.2,0.2 H6.2 L3.2,3.6 Z" fill="#2c2c2c"/></svg><div class="t " style="left:517.40px;top:130.00px;font-size:10.00px;color:#404040;letter-spacing:-0.164px;">CONSTRUCT</div><svg width="8" height="5" viewBox="0 0 8 5" style="left:582.3px;top:136.3px"><path d="M0.2,0.2 H6.2 L3.2,3.6 Z" fill="#2c2c2c"/></svg><div class="t " style="left:611.20px;top:130.00px;font-size:10.00px;color:#404040;letter-spacing:-0.434px;">INSPECT</div><svg width="8" height="5" viewBox="0 0 8 5" style="left:655.1px;top:136.3px"><path d="M0.2,0.2 H6.2 L3.2,3.6 Z" fill="#2c2c2c"/></svg><div class="t " style="left:685.00px;top:130.00px;font-size:10.00px;color:#404040;letter-spacing:-0.348px;">INSERT</div><svg width="8" height="5" viewBox="0 0 8 5" style="left:723.0px;top:136.3px"><path d="M0.2,0.2 H6.2 L3.2,3.6 Z" fill="#2c2c2c"/></svg><div class="t " style="left:749.10px;top:130.00px;font-size:10.00px;color:#404040;letter-spacing:0.040px;">MAKE</div><svg width="8" height="5" viewBox="0 0 8 5" style="left:781.2px;top:136.3px"><path d="M0.2,0.2 H6.2 L3.2,3.6 Z" fill="#2c2c2c"/></svg><div class="t " style="left:808.30px;top:130.00px;font-size:10.00px;color:#404040;letter-spacing:0.012px;">ADD-INS</div><svg width="8" height="5" viewBox="0 0 8 5" style="left:853.1px;top:136.3px"><path d="M0.2,0.2 H6.2 L3.2,3.6 Z" fill="#2c2c2c"/></svg><div class="t " style="left:882.40px;top:130.00px;font-size:10.00px;color:#404040;letter-spacing:-0.284px;">SELECT</div><svg width="8" height="5" viewBox="0 0 8 5" style="left:923.2px;top:136.3px"><path d="M0.2,0.2 H6.2 L3.2,3.6 Z" fill="#2c2c2c"/></svg><div style="left:252.4px;top:90.5px;width:1.4px;height:51px;background:#c3c3c3"></div><div style="left:344.4px;top:90.5px;width:1.4px;height:51px;background:#c3c3c3"></div><div style="left:413.6px;top:90.5px;width:1.4px;height:51px;background:#c3c3c3"></div><div style="left:505.4px;top:90.5px;width:1.4px;height:51px;background:#c3c3c3"></div><div style="left:599.4px;top:90.5px;width:1.4px;height:51px;background:#c3c3c3"></div><div style="left:673.4px;top:90.5px;width:1.4px;height:51px;background:#c3c3c3"></div><div style="left:737.8px;top:90.5px;width:1.4px;height:51px;background:#c3c3c3"></div><div style="left:796.8px;top:90.5px;width:1.4px;height:51px;background:#c3c3c3"></div><div style="left:870.6px;top:90.5px;width:1.4px;height:51px;background:#c3c3c3"></div><svg width="830" height="46" viewBox="120 86 830 46" style="left:120px;top:86px">
<defs>
<linearGradient id="tSk" x1="0" y1="0" x2="1" y2="1"><stop offset="0" stop-color="#ffffff"/><stop offset="1" stop-color="#bcc3d6"/></linearGradient>
<linearGradient id="tRect" x1="0" y1="0" x2="0" y2="1"><stop offset="0" stop-color="#ffffff"/><stop offset="1" stop-color="#a7b0c6"/></linearGradient>
<linearGradient id="tGrey" x1="0" y1="0" x2="0" y2="1"><stop offset="0" stop-color="#f4f5f8"/><stop offset="1" stop-color="#b9bfcc"/></linearGradient>
<linearGradient id="tSky" x1="0" y1="0" x2="0" y2="1"><stop offset="0" stop-color="#a9d2ee"/><stop offset="1" stop-color="#e9f3fa"/></linearGradient>
<linearGradient id="tPur" x1="0" y1="0" x2="1" y2="1"><stop offset="0" stop-color="#e8d6f6"/><stop offset="1" stop-color="#b78ad8"/></linearGradient>
</defs>
<!-- create sketch -->
<rect x="130" y="97" width="25.4" height="25.2" fill="url(#tSk)" stroke="#222" stroke-width="1.4"/>
<path d="M132.6,99 V119.6 H146" stroke="#333" stroke-width="1" fill="none"/>
<rect x="132.2" y="116.4" width="3.2" height="3.2" fill="#3f84d8"/>
<path d="M141.3,108.3 L142.6,104.6 L151.4,96.2 L155.2,99.8 L146,108.6 L141.8,110.2 Z" fill="#f7c83a" stroke="#5a4a2a" stroke-width="0.7"/>
<path d="M141.3,108.3 L142.6,104.6 L146,108.6 L141.8,110.2 Z" fill="#fff" stroke="#444" stroke-width="0.6"/>
<path d="M150.2,97.4 L151.4,96.2 L155.2,99.8 L154,101 Z" fill="#d88a5a"/>
<path d="M149,114 H152.6 V118 H156.6 V121.6 H152.6 V125.2 H149 V121.6 H145.2 V118 H149 Z" fill="#fff" stroke="#2a2a2a" stroke-width="0.9"/>
<!-- arc -->
<path d="M173.3,118.1 H189.4 A11,8.55 0 0 0 189.4,101" fill="none" stroke="#333" stroke-width="1.2"/>
<rect x="187.1" y="98.8" width="4.6" height="4.6" fill="#2f62c9"/><rect x="171" y="115.8" width="4.6" height="4.6" fill="#2f62c9"/><rect x="187.1" y="115.8" width="4.6" height="4.6" fill="#2f62c9"/>
<!-- rectangle -->
<rect x="215.8" y="101.6" width="26.6" height="16.4" fill="url(#tRect)" stroke="#222" stroke-width="1.2"/>
<rect x="239.6" y="99.6" width="4.4" height="4.4" fill="#2f62c9"/><rect x="213.6" y="115.8" width="4.6" height="4.6" fill="#2f62c9"/>
<!-- extrude -->
<path d="M263.6,99 L267.6,94.4 H285.6 V118.6 L281.4,123.6 H263.6 Z" fill="#a5c0e2" stroke="#2b3f63" stroke-width="1.2" stroke-linejoin="round"/>
<path d="M281.4,99 L285.6,94.4 V118.6 L281.4,123.6 Z" fill="#7f9fcd"/>
<path d="M263.6,99 L267.6,94.4 H285.6 L281.4,99 Z" fill="#c9daef"/>
<path d="M263.6,119.4 H281.4 L285.6,114.6 V118.6 L281.4,123.6 H263.6 Z" fill="#dfe5ee"/>
<path d="M263.6,99 H281.4 V123.6 M281.4,99 L285.6,94.4" stroke="#4a638e" stroke-width="0.8" fill="none"/>
<path d="M263.6,119.4 H281.4 L285.6,114.6" stroke="#f4f6fa" stroke-width="0.8" fill="none"/>
<path d="M263.6,99 L267.6,94.4 H285.6 V118.6 L281.4,123.6 H263.6 Z" fill="none" stroke="#2b3f63" stroke-width="1.1" stroke-linejoin="round"/>
<path d="M290.7,120.8 V99.4" stroke="#222" stroke-width="1.1"/><path d="M288.2,101.6 L290.7,98.2 L293.2,101.6" stroke="#222" stroke-width="1.1" fill="none"/>
<!-- form (purple) -->
<path d="M306.4,101 Q306.4,94.2 313,94.2 H325 Q331.8,94.2 331.8,101 V112.4 Q331.8,120 325,120 H313 Q306.4,120 306.4,113 Z" fill="url(#tPur)" stroke="#8e5bb8" stroke-width="1"/>
<path d="M307,102.6 H327.6 M307,108.6 H327.6 M307,114.6 H327.6 M312.6,98 V119.6 M318.4,98 V119.6 M324,98 V119.6 M308,98.2 Q318,96 327.8,98.2 V119 M327.8,98.2 L331,95.8 M327.8,104 L331.6,101 M327.8,110 L331.6,107" stroke="#7d46ad" stroke-width="0.8" fill="none"/>
<rect x="327.2" y="113.6" width="8.4" height="10" fill="#e6e6e6" stroke="#333" stroke-width="1"/>
<path d="M328.4,117.8 H331.2 V115.6 L334.6,118.6 L331.2,121.6 V119.4 H328.4 Z" fill="#222"/>
<!-- modify (press pull) -->
<path d="M365.4,101.4 L372.4,94.6 H378 V123.4 H365.4 Z" fill="url(#tGrey)" stroke="#333" stroke-width="1.1" stroke-linejoin="round"/>
<path d="M370.8,101.4 L377.6,94.4 H391.4 V115.6 L384.4,123.4 H370.8 Z" fill="#9dbbe0" stroke="#2b3f63" stroke-width="1.1" stroke-linejoin="round"/>
<path d="M370.8,101.4 L377.6,94.4 H391.4 L384.4,101.4 Z" fill="#c6d8ee"/>
<path d="M384.4,101.4 L391.4,94.4 V115.6 L384.4,123.4 Z" fill="#6f8fc0"/>
<path d="M370.8,101.4 L377.6,94.4 H391.4 V115.6 L384.4,123.4 H370.8 Z" fill="none" stroke="#2b3f63" stroke-width="1.1" stroke-linejoin="round"/>
<path d="M386.6,105.6 H390.4 V103.2 L395.2,108 L390.4,112.8 V110.4 H386.6 Z" fill="#1f1f1f"/>
<!-- assemble: new component -->
<path d="M424.4,111.6 H436.6 V123.4 H424.4 Z" fill="url(#tGrey)" stroke="#333" stroke-width="1.1"/>
<path d="M436.6,111.6 L440.4,107.6 H452.4 V119.4 L448.6,123.4 H436.6 Z" fill="url(#tGrey)" stroke="#333" stroke-width="1.1" stroke-linejoin="round"/>
<path d="M436.6,111.6 H448.6 V123.4 M448.6,111.6 L452.4,107.6" stroke="#555" stroke-width="0.8" fill="none"/>
<path d="M424.4,99.6 L428.2,95.6 H440.4 V107.6 L436.6,111.6 H424.4 Z" fill="#9dbbe0" stroke="#3c5a8c" stroke-width="1" stroke-linejoin="round"/>
<path d="M424.4,99.6 H436.6 V111.6 M436.6,99.6 L440.4,95.6" stroke="#3c5a8c" stroke-width="0.8" fill="none"/>
<path d="M427.6,94.6 H431 V98.6 H435 V102 H431 V106 H427.6 V102 H423.4 V98.6 H427.6 Z" fill="#fff" stroke="#2a2a2a" stroke-width="0.9"/>
<!-- assemble: joint -->
<path d="M468.4,106 L474.4,98.4 V113.6 L468.4,121.6 Z" fill="url(#tGrey)" stroke="#333" stroke-width="1"/>
<path d="M474.4,98.2 Q474.4,96 477.2,96 Q480,96 480,98.2 V109.6 Q480,111.4 477.2,111.4 Q474.4,111.4 474.4,109.6 Z" fill="url(#tGrey)" stroke="#333" stroke-width="1"/>
<circle cx="477.4" cy="98.4" r="1.1" fill="#555"/>
<path d="M477.2,110.2 V114.6 M485.2,102.2 V107" stroke="#f07a1a" stroke-width="1.2"/>
<path d="M482.4,109 Q482.4,107 485.2,107 Q488,107 488,109 V115.6 Q488,117.4 485.2,117.4 Q482.4,117.4 482.4,115.6 Z" fill="url(#tGrey)" stroke="#333" stroke-width="1"/>
<path d="M488.4,100.4 L495.4,107.4 V122.4 L488.4,115.4 Z" fill="url(#tGrey)" stroke="#333" stroke-width="1"/>
<!-- construct -->
<path d="M538.4,102.6 L545.6,95.6 H553.6 V116.4 L547.4,123.4 H538.4 Z" fill="url(#tGrey)" stroke="#333" stroke-width="1.1" stroke-linejoin="round"/>
<path d="M538.4,102.6 L545.6,95.6 H553.6 L547.4,102.6 Z" fill="#f6f6f8"/>
<path d="M547.6,102.4 L555.2,95.2 V116.6 L547.6,123.6 Z" fill="#4f8f3f" stroke="#2d5a22" stroke-width="0.9"/>
<path d="M559.6,104 L567.6,95.6 V115.6 L559.6,123.6 Z" fill="#e89a62" stroke="#9a4a14" stroke-width="1"/>
<!-- inspect -->
<path d="M622.2,104.5 H651 M622.4,102.2 V106.8 M650.8,102.2 V106.8" stroke="#333" stroke-width="1.1" fill="none"/>
<rect x="622.4" y="112.4" width="28.4" height="5.6" rx="0.8" fill="#f5c526" stroke="#a8740e" stroke-width="0.9"/>
<path d="M625.6,112.6 V114.6 M628.4,112.6 V114 M631.2,112.6 V114.6 M634,112.6 V114 M636.8,112.6 V114.6 M639.6,112.6 V114 M642.4,112.6 V114.6 M645.2,112.6 V114 M648,112.6 V114.6" stroke="#8a5c0a" stroke-width="0.7"/>
<!-- insert -->
<rect x="691.4" y="94.6" width="29" height="28.8" fill="url(#tSky)" stroke="#333" stroke-width="1.2"/>
<circle cx="711.8" cy="101.8" r="2.7" fill="#fff6d0" stroke="#f2d66a" stroke-width="0.9"/>
<path d="M706,113.6 L711.4,109.6 L719.8,116.8 V122.8 H712 Z" fill="#a3adba"/>
<path d="M692,122.8 V113.4 L700.6,107.4 L719.8,122.8 Z" fill="#6e7684"/>
<path d="M700.6,107.4 L704.2,112 L702.6,117 L706.6,122.8 L719.8,122.8 Z" fill="#9199a6"/>
<path d="M700.6,107.4 L719.8,122.4" stroke="#f0f0e8" stroke-width="0.9"/>
<!-- make -->
<path d="M753.4,101.4 Q753.4,99.6 754.6,98.6 L756.6,96.6 Q757.4,96 758.6,96 H777.6 Q778.8,96 779.6,96.6 L781.6,98.6 Q782.8,99.6 782.8,101.4 V121 Q782.8,123.4 780.4,123.4 H755.8 Q753.4,123.4 753.4,121 Z" fill="url(#tGrey)" stroke="#333" stroke-width="1.1"/>
<path d="M754,101 H782.2" stroke="#fff" stroke-width="1"/>
<rect x="757" y="106.4" width="22.2" height="13.4" rx="1" fill="#747a84" stroke="#333" stroke-width="1"/>
<path d="M759.6,118.4 L763.4,111.4 H773 L776.6,118.4 Z" fill="#f2f2f2"/>
<path d="M761.4,115.2 H775 M762.4,113.2 H774 M765.4,111.6 L763.6,118.2 M768.2,111.6 V118.2 M771,111.6 L772.8,118.2" stroke="#c5c5c5" stroke-width="0.5"/>
<path d="M765.6,106.8 H770.6 V111.6 L768.1,114.2 L765.6,111.6 Z" fill="#9ec3e8" stroke="#2f62a8" stroke-width="0.8"/>
<rect x="777" y="103" width="1.8" height="1.8" fill="#1f8a2a"/>
<!-- add-ins -->
<rect x="819.6" y="96.4" width="23" height="21" rx="1" fill="url(#tGrey)" stroke="#333" stroke-width="1.1"/>
<rect x="820.6" y="98" width="21" height="2.8" fill="#8f95a3"/>
<path d="M819.6,101.6 H842.6" stroke="#333" stroke-width="0.9"/>
<path d="M823.2,105.4 L826.2,107.6 L823.2,109.8 M827.6,107.6 H832" stroke="#333" stroke-width="1" fill="none"/>
<g transform="translate(842.1,117.1)"><path d="M-1.4,-6.9 H1.4 L1.8,-5 L3,-4.5 L4.6,-5.6 L6.6,-3.6 L5.5,-2 L6,-0.8 L7.9,-0.4 V2.4 L6,2.8 L5.5,4 L6.6,5.6 L4.6,7.6 L3,6.5 L1.8,7 L1.4,8.9 H-1.4 L-1.8,7 L-3,6.5 L-4.6,7.6 L-6.6,5.6 L-5.5,4 L-6,2.8 L-7.9,2.4 V-0.4 L-6,-0.8 L-5.5,-2 L-6.6,-3.6 L-4.6,-5.6 L-3,-4.5 L-1.8,-5 Z" transform="translate(0,-1) scale(0.86)" fill="#c2d6f0" stroke="#2c4f8c" stroke-width="1"/><circle cx="0" cy="0" r="2.1" fill="#fff" stroke="#2c4f8c" stroke-width="0.8"/></g>
<!-- select -->
<rect x="886.4" y="90.5" width="39.4" height="39" fill="#5b8ab8"/>
<rect x="891.4" y="94.8" width="20.4" height="13.8" fill="none" stroke="#6aa510" stroke-width="1.3"/>
<path d="M911.6,108.6 V121.4 L914.4,118.8 L916.8,124 L919,123 L916.6,118 L920.4,117.8 Z" fill="#fff" stroke="#1c2c40" stroke-width="0.9" stroke-linejoin="round"/>
</svg>
<div style="left:12px;top:150px;width:298px;height:23px;background:#d4d4d4;border:1px solid #a8a8a8;border-radius:1px"></div><svg width="14" height="10" viewBox="0 0 14 10" style="left:16px;top:158px"><path d="M5.4,1.4 L5.4,7.6 L1,4.5 Z M10.8,1.4 L10.8,7.6 L6.4,4.5 Z" fill="#2b2b2b"/></svg><div class="t " style="left:39.40px;top:152.30px;font-size:10.00px;color:#4a4a4a;letter-spacing:-0.010px;">BROWSER</div><svg width="12" height="12" viewBox="0 0 12 12" style="left:289.5px;top:156px"><circle cx="6" cy="6" r="4.6" fill="#1e1e1e"/><rect x="3.2" y="5.3" width="5.6" height="1.5" fill="#e8e8e8"/></svg><div style="left:307px;top:157px;width:1px;height:10px;background:#6a6a6a"></div><div style="left:309px;top:157px;width:1px;height:10px;background:#9a9a9a"></div><div style="left:48px;top:180.2px;width:228px;height:19.5px;background:#c9c9c9"></div><div style="left:50px;top:182px;width:201px;height:15.8px;background:#8d8d8d"></div><svg width="14" height="14" viewBox="0 0 14 14" style="left:28px;top:183px"><path d="M1.3,12 L11.6,12 L11.6,1.8 Z" fill="#8a8a8a" stroke="#262626" stroke-width="1.2" stroke-linejoin="miter"/></svg><svg width="12" height="16" viewBox="0 0 12 16" style="left:52.5px;top:182px"><use href="#bulbY"/></svg><svg width="18" height="16" viewBox="0 0 18 16" style="left:75px;top:182px"><use href="#comp"/></svg><div class="t " style="left:106.50px;top:180.30px;font-size:10.67px;color:#fff;font-weight:bold;letter-spacing:0.202px;">M45 Tactical Shotgun v26</div><svg width="14" height="14" viewBox="0 0 14 14" style="left:254.5px;top:183.8px"><circle cx="7" cy="7" r="5.6" fill="#f4f4f4" stroke="#2a2a2a" stroke-width="1.3"/><circle cx="7" cy="7" r="2.4" fill="#1e1e1e"/></svg><div class="row" style="left:66px;top:204.4px;width:134.0px"></div><svg width="12" height="16" viewBox="0 0 12 16" style="left:46.5px;top:206.0px"><path d="M1.6,2.3 L1.6,13.7 L9.5,8 Z" fill="#f0f0f0" stroke="#2a2a2a" stroke-width="1.2" stroke-linejoin="round"/></svg><svg width="18" height="16" viewBox="0 0 18 16" style="left:67.8px;top:206.0px"><use href="#gear"/></svg><div class="t " style="left:99.20px;top:204.30px;font-size:10.60px;color:#3e3e3e;letter-spacing:0.002px;">Document Settings</div><div class="row" style="left:66px;top:228.4px;width:109.8px"></div><svg width="12" height="16" viewBox="0 0 12 16" style="left:46.5px;top:230.0px"><path d="M1.6,2.3 L1.6,13.7 L9.5,8 Z" fill="#f0f0f0" stroke="#2a2a2a" stroke-width="1.2" stroke-linejoin="round"/></svg><svg width="18" height="16" viewBox="0 0 18 16" style="left:67.8px;top:230.0px"><use href="#folder"/></svg><div class="t " style="left:99.20px;top:228.30px;font-size:10.60px;color:#3e3e3e;letter-spacing:0.136px;">Named Views</div><div class="row" style="left:66px;top:252.4px;width:94.8px"></div><svg width="12" height="16" viewBox="0 0 12 16" style="left:46.5px;top:254.0px"><path d="M1.6,2.3 L1.6,13.7 L9.5,8 Z" fill="#f0f0f0" stroke="#2a2a2a" stroke-width="1.2" stroke-linejoin="round"/></svg><svg width="12" height="16" viewBox="0 0 12 16" style="left:70px;top:253.5px"><use href="#bulbB"/></svg><svg width="18" height="16" viewBox="0 0 18 16" style="left:93.0px;top:254.0px"><use href="#folder"/></svg><div class="t " style="left:124.20px;top:252.30px;font-size:10.60px;color:#3e3e3e;letter-spacing:-0.129px;">Origin</div><div class="row" style="left:66px;top:276.4px;width:102.8px"></div><svg width="12" height="16" viewBox="0 0 12 16" style="left:46.5px;top:278.0px"><path d="M1.6,2.3 L1.6,13.7 L9.5,8 Z" fill="#f0f0f0" stroke="#2a2a2a" stroke-width="1.2" stroke-linejoin="round"/></svg><svg width="12" height="16" viewBox="0 0 12 16" style="left:70px;top:277.5px"><use href="#bulbB"/></svg><svg width="18" height="16" viewBox="0 0 18 16" style="left:93.0px;top:278.0px"><use href="#folder"/></svg><div class="t " style="left:124.20px;top:276.30px;font-size:10.60px;color:#3e3e3e;letter-spacing:0.015px;">Bodies</div><div class="row" style="left:66px;top:300.4px;width:118.8px"></div><svg width="12" height="16" viewBox="0 0 12 16" style="left:46.5px;top:302.0px"><path d="M1.6,2.3 L1.6,13.7 L9.5,8 Z" fill="#f0f0f0" stroke="#2a2a2a" stroke-width="1.2" stroke-linejoin="round"/></svg><svg width="12" height="16" viewBox="0 0 12 16" style="left:70px;top:301.5px"><use href="#bulbB"/></svg><svg width="18" height="16" viewBox="0 0 18 16" style="left:93.0px;top:302.0px"><use href="#folder"/></svg><div class="t " style="left:124.20px;top:300.30px;font-size:10.60px;color:#3e3e3e;letter-spacing:0.170px;">Canvases</div><div class="row" style="left:66px;top:324.4px;width:114.8px"></div><svg width="12" height="16" viewBox="0 0 12 16" style="left:46.5px;top:326.0px"><path d="M1.6,2.3 L1.6,13.7 L9.5,8 Z" fill="#f0f0f0" stroke="#2a2a2a" stroke-width="1.2" stroke-linejoin="round"/></svg><svg width="12" height="16" viewBox="0 0 12 16" style="left:70px;top:325.5px"><use href="#bulbB"/></svg><svg width="18" height="16" viewBox="0 0 18 16" style="left:93.0px;top:326.0px"><use href="#folder"/></svg><div class="t " style="left:124.20px;top:324.30px;font-size:10.60px;color:#3e3e3e;letter-spacing:0.125px;">Sketches</div><div class="row" style="left:66px;top:348.4px;width:130.9px"></div><svg width="12" height="16" viewBox="0 0 12 16" style="left:46.5px;top:350.0px"><path d="M1.6,2.3 L1.6,13.7 L9.5,8 Z" fill="#f0f0f0" stroke="#2a2a2a" stroke-width="1.2" stroke-linejoin="round"/></svg><svg width="12" height="16" viewBox="0 0 12 16" style="left:70px;top:349.5px"><use href="#bulbB"/></svg><svg width="18" height="16" viewBox="0 0 18 16" style="left:93.0px;top:350.0px"><use href="#body"/></svg><div class="t " style="left:124.20px;top:348.30px;font-size:10.60px;color:#3e3e3e;letter-spacing:-0.009px;">StockMirror:1</div><div class="row" style="left:66px;top:372.4px;width:102.8px"></div><svg width="12" height="16" viewBox="0 0 12 16" style="left:46.5px;top:374.0px"><path d="M1.6,2.3 L1.6,13.7 L9.5,8 Z" fill="#f0f0f0" stroke="#2a2a2a" stroke-width="1.2" stroke-linejoin="round"/></svg><svg width="12" height="16" viewBox="0 0 12 16" style="left:70px;top:373.5px"><use href="#bulbB"/></svg><svg width="18" height="16" viewBox="0 0 18 16" style="left:93.0px;top:374.0px"><use href="#body"/></svg><div class="t " style="left:124.20px;top:372.30px;font-size:10.60px;color:#3e3e3e;letter-spacing:-0.022px;">Stock:1</div><div class="row" style="left:66px;top:396.4px;width:123.0px"></div><svg width="12" height="16" viewBox="0 0 12 16" style="left:46.5px;top:398.0px"><path d="M1.6,2.3 L1.6,13.7 L9.5,8 Z" fill="#f0f0f0" stroke="#2a2a2a" stroke-width="1.2" stroke-linejoin="round"/></svg><svg width="12" height="16" viewBox="0 0 12 16" style="left:70px;top:397.5px"><use href="#bulbY"/></svg><svg width="18" height="16" viewBox="0 0 18 16" style="left:93.0px;top:398.0px"><use href="#body"/></svg><div class="t " style="left:124.20px;top:396.30px;font-size:10.60px;color:#3e3e3e;letter-spacing:-0.098px;">MainBody:1</div><div class="row" style="left:66px;top:420.4px;width:150.9px"></div><svg width="12" height="16" viewBox="0 0 12 16" style="left:46.5px;top:422.0px"><path d="M1.6,2.3 L1.6,13.7 L9.5,8 Z" fill="#f0f0f0" stroke="#2a2a2a" stroke-width="1.2" stroke-linejoin="round"/></svg><svg width="12" height="16" viewBox="0 0 12 16" style="left:70px;top:421.5px"><use href="#bulbY"/></svg><svg width="18" height="16" viewBox="0 0 18 16" style="left:93.0px;top:422.0px"><use href="#body"/></svg><div class="t " style="left:124.20px;top:420.30px;font-size:10.60px;color:#3e3e3e;letter-spacing:-0.034px;">MainBodyMirror:1</div><div class="row" style="left:66px;top:444.4px;width:154.8px"></div><svg width="12" height="16" viewBox="0 0 12 16" style="left:46.5px;top:446.0px"><path d="M1.6,2.3 L1.6,13.7 L9.5,8 Z" fill="#f0f0f0" stroke="#2a2a2a" stroke-width="1.2" stroke-linejoin="round"/></svg><svg width="12" height="16" viewBox="0 0 12 16" style="left:70px;top:445.5px"><use href="#bulbB"/></svg><svg width="18" height="16" viewBox="0 0 18 16" style="left:93.0px;top:446.0px"><use href="#body"/></svg><div class="t " style="left:124.20px;top:444.30px;font-size:10.60px;color:#3e3e3e;letter-spacing:0.001px;">MagazineShroud:1</div><div class="row" style="left:66px;top:468.4px;width:123.0px"></div><svg width="12" height="16" viewBox="0 0 12 16" style="left:46.5px;top:470.0px"><path d="M1.6,2.3 L1.6,13.7 L9.5,8 Z" fill="#f0f0f0" stroke="#2a2a2a" stroke-width="1.2" stroke-linejoin="round"/></svg><svg width="12" height="16" viewBox="0 0 12 16" style="left:70px;top:469.5px"><use href="#bulbB"/></svg><svg width="18" height="16" viewBox="0 0 18 16" style="left:93.0px;top:470.0px"><use href="#body"/></svg><div class="t " style="left:124.20px;top:468.30px;font-size:10.60px;color:#3e3e3e;letter-spacing:-0.080px;">Magazine:1</div><div class="row" style="left:66px;top:492.4px;width:102.8px"></div><svg width="12" height="16" viewBox="0 0 12 16" style="left:46.5px;top:494.0px"><path d="M1.6,2.3 L1.6,13.7 L9.5,8 Z" fill="#f0f0f0" stroke="#2a2a2a" stroke-width="1.2" stroke-linejoin="round"/></svg><svg width="12" height="16" viewBox="0 0 12 16" style="left:70px;top:493.5px"><use href="#bulbB"/></svg><svg width="18" height="16" viewBox="0 0 18 16" style="left:93.0px;top:494.0px"><use href="#body"/></svg><div class="t " style="left:124.20px;top:492.30px;font-size:10.60px;color:#3e3e3e;letter-spacing:-0.027px;">Barrel:1</div><div class="row" style="left:66px;top:516.4px;width:98.8px"></div><svg width="12" height="16" viewBox="0 0 12 16" style="left:46.5px;top:518.0px"><path d="M1.6,2.3 L1.6,13.7 L9.5,8 Z" fill="#f0f0f0" stroke="#2a2a2a" stroke-width="1.2" stroke-linejoin="round"/></svg><svg width="12" height="16" viewBox="0 0 12 16" style="left:70px;top:517.5px"><use href="#bulbB"/></svg><svg width="18" height="16" viewBox="0 0 18 16" style="left:93.0px;top:518.0px"><use href="#body"/></svg><div class="t " style="left:124.20px;top:516.30px;font-size:10.60px;color:#3e3e3e;letter-spacing:-0.202px;">Slide:1</div><div class="row" style="left:66px;top:540.4px;width:183.0px"></div><svg width="12" height="16" viewBox="0 0 12 16" style="left:46.5px;top:542.0px"><path d="M1.6,2.3 L1.6,13.7 L9.5,8 Z" fill="#f0f0f0" stroke="#2a2a2a" stroke-width="1.2" stroke-linejoin="round"/></svg><svg width="12" height="16" viewBox="0 0 12 16" style="left:70px;top:541.5px"><use href="#bulbB"/></svg><svg width="18" height="16" viewBox="0 0 18 16" style="left:93.0px;top:542.0px"><use href="#body"/></svg><div class="t " style="left:124.20px;top:540.30px;font-size:10.60px;color:#3e3e3e;letter-spacing:0.011px;">MagazineShroudMirror:1</div><div style="left:12px;top:969px;width:298px;height:22.6px;background:#d4d4d4;border:1px solid #a8a8a8;border-radius:1px"></div><div class="t " style="left:39.30px;top:971.30px;font-size:10.00px;color:#4a4a4a;letter-spacing:-0.229px;">COMMENTS</div><svg width="12" height="12" viewBox="0 0 12 12" style="left:289.5px;top:975.2px"><circle cx="6" cy="6" r="4.8" fill="#1e1e1e"/><rect x="3.2" y="5.3" width="5.6" height="1.4" fill="#e8e8e8"/><rect x="5.3" y="3.2" width="1.4" height="5.6" fill="#e8e8e8"/></svg><div style="left:307px;top:976px;width:1px;height:10px;background:#6a6a6a"></div><div style="left:309px;top:976px;width:1px;height:10px;background:#9a9a9a"></div><div style="left:845px;top:970px;width:145px;height:24px;background:#c9c9c9"></div><div style="left:996.5px;top:970px;width:93.5px;height:24px;background:#c9c9c9"></div><svg width="250" height="26" viewBox="843 969 250 26" style="left:843px;top:969px">
<defs>
<radialGradient id="nGl" cx="0.4" cy="0.35" r="0.7"><stop offset="0" stop-color="#ffffff"/><stop offset="1" stop-color="#cfe6ea"/></radialGradient>
<linearGradient id="nGr" x1="0" y1="0" x2="0" y2="1"><stop offset="0" stop-color="#6e6e6e"/><stop offset="0.6" stop-color="#7b8494"/><stop offset="1" stop-color="#9fb0cc"/></linearGradient>
</defs>
<g fill="#262626">
<path d="M868.9,980.2 H875.1 L872,983.9 Z"/><path d="M979.8,980.2 H986.1 L982.95,983.9 Z"/>
<path d="M1018.1,980.2 H1024.1 L1021.1,983.7 Z"/><path d="M1049.1,980.2 H1055.1 L1052.1,983.7 Z"/><path d="M1080,980.2 H1086 L1083,983.7 Z"/>
</g>
<!-- orbit -->
<path d="M858.6,980.4 Q863.4,981 863.4,983.2 Q863.4,986.2 856,986.4 Q852.6,986.4 851.4,985.8" fill="none" stroke="#262626" stroke-width="1.1"/>
<path d="M854.4,980.5 Q848.2,981.2 848.2,983.3 Q848.2,984.6 850,985.4" fill="none" stroke="#262626" stroke-width="1.1"/>
<path d="M855.4,989.4 V977.4 H853.9 L856.5,974.3 L859.1,977.4 H857.6 V989.4 Z" fill="#fff" stroke="#262626" stroke-width="0.9"/>
<path d="M853.4,983.8 L849.8,986 L853.6,988.4 Z" fill="#262626"/>
<!-- look at -->
<path d="M882.6,979.2 L887.6,974.6 L889.2,976.8 L892.6,975 V979.2" fill="#d9d9d9" stroke="#3a3f4a" stroke-width="0.9"/>
<rect x="881.6" y="979.4" width="15" height="10" fill="#fff" stroke="#262a33" stroke-width="1.3"/>
<rect x="884.4" y="982.2" width="9.4" height="4.4" fill="#a9b3c9" stroke="#4a5568" stroke-width="0.8"/>
<!-- hand -->
<path d="M911.2,989.6 L908,984.6 Q907,983 908.2,982.6 Q909.4,982.4 910.4,983.6 L911.6,985 V977.2 Q911.6,976 912.6,976 Q913.6,976 913.6,977.2 V981.6 V975.6 Q913.6,974.4 914.7,974.4 Q915.8,974.4 915.8,975.6 V981.6 V976.2 Q915.8,975 916.9,975 Q918,975 918,976.2 V982 V978.2 Q918,977.2 919,977.2 Q920.2,977.2 920.2,978.4 V985 Q920.2,987.6 918.8,989.6 Z" fill="#fff" stroke="#262626" stroke-width="0.9" stroke-linejoin="round"/>
<!-- zoom -->
<path d="M940.6,984.2 L945.2,988.4" stroke="#262626" stroke-width="2.4" stroke-linecap="round"/>
<circle cx="937.5" cy="980.9" r="4.4" fill="url(#nGl)" stroke="#3a3a3a" stroke-width="1.1"/>
<path d="M944.2,976.6 H949 M946.6,974.4 V978.8 M944.2,981 H949" stroke="#262626" stroke-width="0.9" fill="none"/>
<!-- zoom window -->
<rect x="959.6" y="974.5" width="15.4" height="15" fill="none" stroke="#333" stroke-width="0.9" stroke-dasharray="2,1.6"/>
<path d="M969.8,983.8 L973.6,988.4" stroke="#262626" stroke-width="2.6" stroke-linecap="round"/>
<circle cx="965.6" cy="979.3" r="6" fill="url(#nGl)" stroke="#3a3a3a" stroke-width="1.2"/>
<!-- display -->
<path d="M1004.6,989.6 Q1004.2,988.2 1006,987.6 L1006.6,986.6 H1009.6 L1010.2,987.6 Q1012,988.2 1011.6,989.6 Z" fill="#fff" stroke="#262626" stroke-width="0.8"/>
<rect x="1000.4" y="974.4" width="15.4" height="12.4" rx="1.2" fill="#fff" stroke="#262626" stroke-width="1.2"/>
<rect x="1002.4" y="976.4" width="11.4" height="8" rx="1" fill="#9dbce0" stroke="#2b4a80" stroke-width="1.3"/>
<!-- grid -->
<rect x="1031.4" y="974.4" width="15.4" height="15.2" rx="1.4" fill="url(#nGr)" stroke="#333" stroke-width="0.8"/>
<g fill="#fff">
<rect x="1032.30" y="975.30" width="1.7" height="1.7" opacity="1.00"/><rect x="1035.30" y="975.30" width="1.7" height="1.7" opacity="1.00"/><rect x="1038.30" y="975.30" width="1.7" height="1.7" opacity="1.00"/><rect x="1041.30" y="975.30" width="1.7" height="1.7" opacity="1.00"/><rect x="1044.30" y="975.30" width="1.7" height="1.7" opacity="1.00"/><rect x="1032.30" y="978.25" width="1.7" height="1.7" opacity="0.91"/><rect x="1035.30" y="978.25" width="1.7" height="1.7" opacity="0.91"/><rect x="1038.30" y="978.25" width="1.7" height="1.7" opacity="0.91"/><rect x="1041.30" y="978.25" width="1.7" height="1.7" opacity="0.91"/><rect x="1044.30" y="978.25" width="1.7" height="1.7" opacity="0.91"/><rect x="1032.30" y="981.20" width="1.7" height="1.7" opacity="0.82"/><rect x="1035.30" y="981.20" width="1.7" height="1.7" opacity="0.82"/><rect x="1038.30" y="981.20" width="1.7" height="1.7" opacity="0.82"/><rect x="1041.30" y="981.20" width="1.7" height="1.7" opacity="0.82"/><rect x="1044.30" y="981.20" width="1.7" height="1.7" opacity="0.82"/><rect x="1032.30" y="984.15" width="1.7" height="1.7" opacity="0.73"/><rect x="1035.30" y="984.15" width="1.7" height="1.7" opacity="0.73"/><rect x="1038.30" y="984.15" width="1.7" height="1.7" opacity="0.73"/><rect x="1041.30" y="984.15" width="1.7" height="1.7" opacity="0.73"/><rect x="1044.30" y="984.15" width="1.7" height="1.7" opacity="0.73"/><rect x="1032.30" y="987.10" width="1.7" height="1.7" opacity="0.64"/><rect x="1035.30" y="987.10" width="1.7" height="1.7" opacity="0.64"/><rect x="1038.30" y="987.10" width="1.7" height="1.7" opacity="0.64"/><rect x="1041.30" y="987.10" width="1.7" height="1.7" opacity="0.64"/><rect x="1044.30" y="987.10" width="1.7" height="1.7" opacity="0.64"/>
</g>
<!-- viewports -->
<g fill="#a9c4e6" stroke="#2b4a80" stroke-width="1.4">
<rect x="1062.8" y="975.6" width="6.6" height="5.6" rx="1"/><rect x="1069.8" y="975.6" width="6.6" height="5.6" rx="1"/>
<rect x="1062.8" y="981.8" width="6.6" height="5.6" rx="1"/><rect x="1069.8" y="981.8" width="6.6" height="5.6" rx="1"/>
</g>
<g fill="#7d9ccc"><rect x="1064.8" y="977.6" width="2.6" height="1.4"/><rect x="1071.8" y="977.6" width="2.6" height="1.4"/><rect x="1064.8" y="983.8" width="2.6" height="1.4"/><rect x="1071.8" y="983.8" width="2.6" height="1.4"/></g>
</svg>
<div style="left:8px;top:998px;width:1920px;height:8px;background:#e1e1e1"></div><div style="left:12px;top:998px;width:106px;height:6.5px;background:#929292;border-radius:3.5px"></div><div style="left:8px;top:1006px;width:1920px;height:41.5px;background:#d3d3d3"></div><div style="left:8px;top:1047px;width:1920px;height:1px;background:#3e4754"></div><div style="left:8px;top:1048px;width:1920px;height:8px;overflow:hidden;background:linear-gradient(90deg,#3a567a 0,#3f5e84 10%,#4a6d97 18%,#5f88b4 27%,#6f9ac4 34%,#78a2ca 50%,#7aa3ca 62%,#719bc4 75%,#6a93bd 84%,#4f7199 86.5%,#44648c 100%)"><div style="left:10px;top:1px;width:32px;height:32px;border-radius:16px;background:radial-gradient(circle at 50% 30%,#e4f0fa 0,#9cc4e8 45%,#3f6a9a 90%);box-shadow:0 0 0 1px #27405e"></div><div style="left:56px;top:2px;width:2px;height:2px;background:#dfe8f2"></div><div style="left:60px;top:2px;width:2px;height:2px;background:#dfe8f2"></div><div style="left:64px;top:2px;width:2px;height:2px;background:#dfe8f2"></div><div style="left:76px;top:1px;width:57px;height:12px;border-radius:2px;background:#86a9d0;border:1px solid #27405e;box-shadow:inset 0 0 0 1px #b6cfe8"></div><div style="left:98px;top:3px;width:16px;height:16px;border-radius:8px;background:#dc4a3c"></div><div style="left:138px;top:1px;width:53px;height:12px;border-radius:2px;background:#9ebbdc;border:1px solid #27405e;box-shadow:inset 0 0 0 1px #c9dcf0"></div><div style="left:158px;top:5px;width:14px;height:6px;background:#e8c070"></div><div style="left:194px;top:1px;width:4px;height:10px;border:1px solid #27405e;background:#86a9d0"></div><div style="left:218px;top:2px;width:22px;height:20px;border-radius:11px;background:#1c2c44"></div><div style="left:284px;top:3px;width:14px;height:9px;background:#222;transform:skewX(-35deg)"></div><div style="left:343px;top:2px;width:24px;height:9px;background:#161616;border-radius:3px 3px 0 0;transform:skewX(-12deg)"></div><div style="left:402px;top:1px;width:13px;height:12px;border-radius:6px;background:#101010;box-shadow:-3px 2px 0 0 #f4f4f4"></div><div style="left:468px;top:3px;width:16px;height:10px;background:#5faa4a;transform:rotate(45deg)"></div><div style="left:509px;top:1px;width:58px;height:12px;border-radius:2px;background:#cfdff0;border:1px solid #27405e;box-shadow:inset 0 0 0 1px #f0f6fc"></div><div style="left:529px;top:4px;width:14px;height:8px;border-radius:3px;background:#ea9a4a"></div><div style="left:968px;top:0px;width:32px;height:8px;background:#2f4a6c;filter:blur(2px)"></div><div style="left:1010px;top:0px;width:28px;height:8px;background:#2f4a6c;filter:blur(2px)"></div><div style="left:1664px;top:3px;width:2px;height:2px;background:#1c2c44"></div><div style="left:1667.5px;top:3px;width:2px;height:2px;background:#1c2c44"></div><div style="left:1671px;top:3px;width:2px;height:2px;background:#1c2c44"></div><div style="left:1907px;top:2px;width:13px;height:8px;background:#5f83ab;border:1px solid #9ab4d0"></div></div><svg width="120" height="20" viewBox="0 0 120 20" style="left:15px;top:1013px"><g fill="#3a3a3a"><rect x="3.6" y="3.6" width="1.7" height="13"/><path d="M15.6,3.6 V16.6 L6,10.1 Z"/><path d="M37,4.4 V15.8 L28.6,10.1 Z"/><rect x="38.6" y="7.2" width="1.8" height="5.8"/><path d="M53.4,2.6 V17.6 L65.4,10.1 Z"/><path d="M80.6,4.4 V15.8 L89,10.1 Z"/><rect x="77.2" y="7.2" width="1.8" height="5.8"/><path d="M103.6,3.6 V16.6 L113.2,10.1 Z"/><rect x="113.8" y="3.6" width="1.7" height="13"/></g></svg><div style="left:161px;top:1039.9px;width:1711px;height:2px;background:#5c5c5c"></div><div style="left:1874px;top:1039.9px;width:3px;height:2px;background:#5a5a5a"></div><div style="left:1879px;top:1039.9px;width:3px;height:2px;background:#5a5a5a"></div><svg width="20" height="20" viewBox="0 0 20 20" style="left:151.1px;top:1013px"><use href="#tlIMG"/></svg><svg width="20" height="20" viewBox="0 0 20 20" style="left:175.1px;top:1013px"><use href="#tlSK"/></svg><svg width="20" height="20" viewBox="0 0 20 20" style="left:199.1px;top:1013px"><use href="#tlEX"/></svg><svg width="20" height="20" viewBox="0 0 20 20" style="left:223.1px;top:1013px"><use href="#tlEX"/></svg><svg width="20" height="20" viewBox="0 0 20 20" style="left:247.1px;top:1013px"><use href="#tlEX"/></svg><svg width="20" height="20" viewBox="0 0 20 20" style="left:271.1px;top:1013px"><use href="#tlEX"/></svg><svg width="20" height="20" viewBox="0 0 20 20" style="left:295.1px;top:1013px"><use href="#tlEX"/></svg><svg width="20" height="20" viewBox="0 0 20 20" style="left:319.1px;top:1013px"><use href="#tlCH"/></svg><svg width="20" height="20" viewBox="0 0 20 20" style="left:343.1px;top:1013px"><use href="#tlEX"/></svg><svg width="20" height="20" viewBox="0 0 20 20" style="left:367.1px;top:1013px"><use href="#tlFI"/></svg><svg width="20" height="20" viewBox="0 0 20 20" style="left:391.1px;top:1013px"><use href="#tlEX"/></svg><svg width="20" height="20" viewBox="0 0 20 20" style="left:415.1px;top:1013px"><use href="#tlPP"/></svg><svg width="20" height="20" viewBox="0 0 20 20" style="left:439.1px;top:1013px"><use href="#tlEX"/></svg><svg width="20" height="20" viewBox="0 0 20 20" style="left:463.1px;top:1013px"><use href="#tlPP"/></svg><svg width="20" height="20" viewBox="0 0 20 20" style="left:487.1px;top:1013px"><use href="#tlEX"/></svg><svg width="20" height="20" viewBox="0 0 20 20" style="left:511.1px;top:1013px"><use href="#tlEX"/></svg><svg width="20" height="20" viewBox="0 0 20 20" style="left:535.1px;top:1013px"><use href="#tlEX"/></svg><svg width="20" height="20" viewBox="0 0 20 20" style="left:559.1px;top:1013px"><use href="#tlEX"/></svg><svg width="20" height="20" viewBox="0 0 20 20" style="left:583.1px;top:1013px"><use href="#tlPP"/></svg><svg width="20" height="20" viewBox="0 0 20 20" style="left:607.1px;top:1013px"><use href="#tlPP"/></svg><svg width="20" height="20" viewBox="0 0 20 20" style="left:631.1px;top:1013px"><use href="#tlSP"/></svg><svg width="20" height="20" viewBox="0 0 20 20" style="left:655.1px;top:1013px"><use href="#tlEX"/></svg><svg width="20" height="20" viewBox="0 0 20 20" style="left:679.1px;top:1013px"><use href="#tlFI"/></svg><svg width="20" height="20" viewBox="0 0 20 20" style="left:703.1px;top:1013px"><use href="#tlEX"/></svg><svg width="20" height="20" viewBox="0 0 20 20" style="left:727.1px;top:1013px"><use href="#tlSP"/></svg><svg width="20" height="20" viewBox="0 0 20 20" style="left:751.1px;top:1013px"><use href="#tlCH"/></svg><svg width="20" height="20" viewBox="0 0 20 20" style="left:775.1px;top:1013px"><use href="#tlEX"/></svg><svg width="20" height="20" viewBox="0 0 20 20" style="left:799.1px;top:1013px"><use href="#tlEX"/></svg><svg width="20" height="20" viewBox="0 0 20 20" style="left:823.1px;top:1013px"><use href="#tlEX"/></svg><svg width="20" height="20" viewBox="0 0 20 20" style="left:847.1px;top:1013px"><use href="#tlPP"/></svg><svg width="20" height="20" viewBox="0 0 20 20" style="left:871.1px;top:1013px"><use href="#tlEX"/></svg><svg width="20" height="20" viewBox="0 0 20 20" style="left:895.1px;top:1013px"><use href="#tlEX"/></svg><svg width="20" height="20" viewBox="0 0 20 20" style="left:919.1px;top:1013px"><use href="#tlFI"/></svg><svg width="20" height="20" viewBox="0 0 20 20" style="left:943.1px;top:1013px"><use href="#tlSP"/></svg><svg width="20" height="20" viewBox="0 0 20 20" style="left:967.1px;top:1013px"><use href="#tlCH"/></svg><svg width="20" height="20" viewBox="0 0 20 20" style="left:991.1px;top:1013px"><use href="#tlCB"/></svg><svg width="20" height="20" viewBox="0 0 20 20" style="left:1015.1px;top:1013px"><use href="#tlCH"/></svg><svg width="20" height="20" viewBox="0 0 20 20" style="left:1039.1px;top:1013px"><use href="#tlCH"/></svg><svg width="20" height="20" viewBox="0 0 20 20" style="left:1063.1px;top:1013px"><use href="#tlSP"/></svg><svg width="20" height="20" viewBox="0 0 20 20" style="left:1087.1px;top:1013px"><use href="#tlSP"/></svg><svg width="20" height="20" viewBox="0 0 20 20" style="left:1111.1px;top:1013px"><use href="#tlCH"/></svg><svg width="20" height="20" viewBox="0 0 20 20" style="left:1135.1px;top:1013px"><use href="#tlCH"/></svg><svg width="20" height="20" viewBox="0 0 20 20" style="left:1159.1px;top:1013px"><use href="#tlCH"/></svg><svg width="20" height="20" viewBox="0 0 20 20" style="left:1183.1px;top:1013px"><use href="#tlCH"/></svg><svg width="20" height="20" viewBox="0 0 20 20" style="left:1207.1px;top:1013px"><use href="#tlCH"/></svg><svg width="20" height="20" viewBox="0 0 20 20" style="left:1231.1px;top:1013px"><use href="#tlSK"/></svg><svg width="20" height="20" viewBox="0 0 20 20" style="left:1255.1px;top:1013px"><use href="#tlEX"/></svg><svg width="20" height="20" viewBox="0 0 20 20" style="left:1279.1px;top:1013px"><use href="#tlFI"/></svg><svg width="20" height="20" viewBox="0 0 20 20" style="left:1303.1px;top:1013px"><use href="#tlSK"/></svg><svg width="20" height="20" viewBox="0 0 20 20" style="left:1327.1px;top:1013px"><use href="#tlEX"/></svg><svg width="20" height="20" viewBox="0 0 20 20" style="left:1351.1px;top:1013px"><use href="#tlFI"/></svg><svg width="20" height="20" viewBox="0 0 20 20" style="left:1375.1px;top:1013px"><use href="#tlEX"/></svg><svg width="20" height="20" viewBox="0 0 20 20" style="left:1399.1px;top:1013px"><use href="#tlCH"/></svg><svg width="20" height="20" viewBox="0 0 20 20" style="left:1423.1px;top:1013px"><use href="#tlCB"/></svg><svg width="20" height="20" viewBox="0 0 20 20" style="left:1447.1px;top:1013px"><use href="#tlCB"/></svg><svg width="20" height="20" viewBox="0 0 20 20" style="left:1471.1px;top:1013px"><use href="#tlCH"/></svg><svg width="20" height="20" viewBox="0 0 20 20" style="left:1495.1px;top:1013px"><use href="#tlEX"/></svg><svg width="20" height="20" viewBox="0 0 20 20" style="left:1519.1px;top:1013px"><use href="#tlBX"/></svg><svg width="20" height="20" viewBox="0 0 20 20" style="left:1543.1px;top:1013px"><use href="#tlCH"/></svg><svg width="20" height="20" viewBox="0 0 20 20" style="left:1567.1px;top:1013px"><use href="#tlCH"/></svg><svg width="20" height="20" viewBox="0 0 20 20" style="left:1591.1px;top:1013px"><use href="#tlBX"/></svg><svg width="20" height="20" viewBox="0 0 20 20" style="left:1615.1px;top:1013px"><use href="#tlBX"/></svg><svg width="20" height="20" viewBox="0 0 20 20" style="left:1639.1px;top:1013px"><use href="#tlSK"/></svg><svg width="20" height="20" viewBox="0 0 20 20" style="left:1663.1px;top:1013px"><use href="#tlEX"/></svg><svg width="20" height="20" viewBox="0 0 20 20" style="left:1687.1px;top:1013px"><use href="#tlEX"/></svg><svg width="20" height="20" viewBox="0 0 20 20" style="left:1711.1px;top:1013px"><use href="#tlCH"/></svg><svg width="20" height="20" viewBox="0 0 20 20" style="left:1735.1px;top:1013px"><use href="#tlCH"/></svg><svg width="20" height="20" viewBox="0 0 20 20" style="left:1759.1px;top:1013px"><use href="#tlFI"/></svg><svg width="20" height="20" viewBox="0 0 20 20" style="left:1783.1px;top:1013px"><use href="#tlEX"/></svg><svg width="20" height="20" viewBox="0 0 20 20" style="left:1807.1px;top:1013px"><use href="#tlFI"/></svg><svg width="20" height="20" viewBox="0 0 20 20" style="left:1831.1px;top:1013px"><use href="#tlRM"/></svg><svg width="20" height="20" viewBox="0 0 20 20" style="left:1855.1px;top:1013px"><use href="#tlCH"/></svg><svg width="1712" height="5" viewBox="0 0 1712 5" style="left:160.8px;top:1036.3px"><g fill="#5c5c5c"><rect x="0" y="0" width="2" height="5"/><rect x="24" y="0" width="2" height="5"/><rect x="48" y="0" width="2" height="5"/><rect x="72" y="0" width="2" height="5"/><rect x="96" y="0" width="2" height="5"/><rect x="120" y="0" width="2" height="5"/><rect x="144" y="0" width="2" height="5"/><rect x="168" y="0" width="2" height="5"/><rect x="192" y="0" width="2" height="5"/><rect x="216" y="0" width="2" height="5"/><rect x="240" y="0" width="2" height="5"/><rect x="264" y="0" width="2" height="5"/><rect x="288" y="0" width="2" height="5"/><rect x="312" y="0" width="2" height="5"/><rect x="336" y="0" width="2" height="5"/><rect x="360" y="0" width="2" height="5"/><rect x="384" y="0" width="2" height="5"/><rect x="408" y="0" width="2" height="5"/><rect x="432" y="0" width="2" height="5"/><rect x="456" y="0" width="2" height="5"/><rect x="480" y="0" width="2" height="5"/><rect x="504" y="0" width="2" height="5"/><rect x="528" y="0" width="2" height="5"/><rect x="552" y="0" width="2" height="5"/><rect x="576" y="0" width="2" height="5"/><rect x="600" y="0" width="2" height="5"/><rect x="624" y="0" width="2" height="5"/><rect x="648" y="0" width="2" height="5"/><rect x="672" y="0" width="2" height="5"/><rect x="696" y="0" width="2" height="5"/><rect x="720" y="0" width="2" height="5"/><rect x="744" y="0" width="2" height="5"/><rect x="768" y="0" width="2" height="5"/><rect x="792" y="0" width="2" height="5"/><rect x="816" y="0" width="2" height="5"/><rect x="840" y="0" width="2" height="5"/><rect x="864" y="0" width="2" height="5"/><rect x="888" y="0" width="2" height="5"/><rect x="912" y="0" width="2" height="5"/><rect x="936" y="0" width="2" height="5"/><rect x="960" y="0" width="2" height="5"/><rect x="984" y="0" width="2" height="5"/><rect x="1008" y="0" width="2" height="5"/><rect x="1032" y="0" width="2" height="5"/><rect x="1056" y="0" width="2" height="5"/><rect x="1080" y="0" width="2" height="5"/><rect x="1104" y="0" width="2" height="5"/><rect x="1128" y="0" width="2" height="5"/><rect x="1152" y="0" width="2" height="5"/><rect x="1176" y="0" width="2" height="5"/><rect x="1200" y="0" width="2" height="5"/><rect x="1224" y="0" width="2" height="5"/><rect x="1248" y="0" width="2" height="5"/><rect x="1272" y="0" width="2" height="5"/><rect x="1296" y="0" width="2" height="5"/><rect x="1320" y="0" width="2" height="5"/><rect x="1344" y="0" width="2" height="5"/><rect x="1368" y="0" width="2" height="5"/><rect x="1392" y="0" width="2" height="5"/><rect x="1416" y="0" width="2" height="5"/><rect x="1440" y="0" width="2" height="5"/><rect x="1464" y="0" width="2" height="5"/><rect x="1488" y="0" width="2" height="5"/><rect x="1512" y="0" width="2" height="5"/><rect x="1536" y="0" width="2" height="5"/><rect x="1560" y="0" width="2" height="5"/><rect x="1584" y="0" width="2" height="5"/><rect x="1608" y="0" width="2" height="5"/><rect x="1632" y="0" width="2" height="5"/><rect x="1656" y="0" width="2" height="5"/><rect x="1680" y="0" width="2" height="5"/><rect x="1704" y="0" width="2" height="5"/></g></svg><svg width="18" height="18" viewBox="0 0 18 18" style="left:1901.7px;top:1015px"><use href="#gear"/></svg><div class="blk" style="left:0;top:0;width:8px;height:1056px"></div><div class="blk" style="left:1928px;top:0;width:8px;height:1056px"></div><div class="blk" style="left:1607px;top:0;width:329px;height:8px"></div>
</div>
</body></html>
